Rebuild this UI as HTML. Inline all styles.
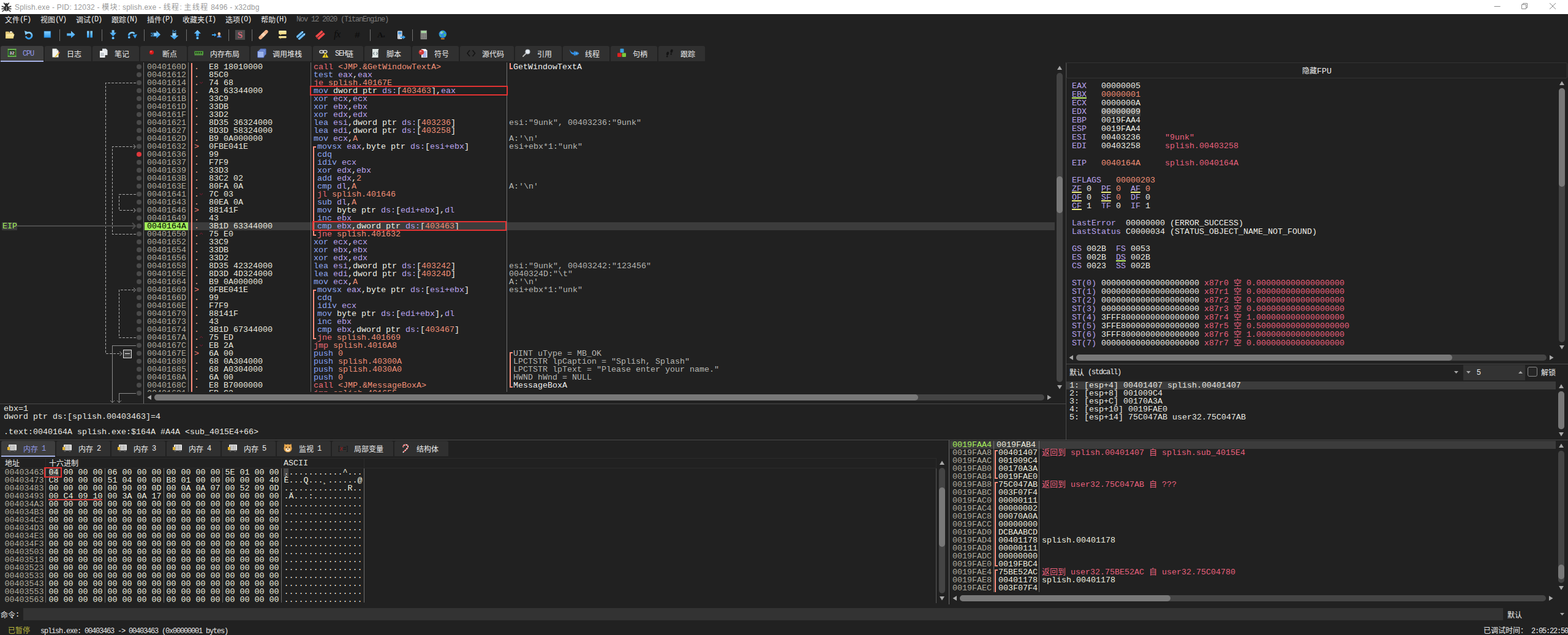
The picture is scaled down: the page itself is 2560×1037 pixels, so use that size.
<!DOCTYPE html>
<html lang="zh-CN"><head><meta charset="utf-8"><title>Splish.exe - x32dbg</title>
<style>
html,body{margin:0;padding:0;}
body{width:2560px;height:1037px;overflow:hidden;background:#212121;position:relative;font-family:"Liberation Mono","Noto Sans CJK SC",monospace;}
div,span,svg{box-sizing:border-box;}
.m{position:absolute;font-family:"Liberation Mono","Noto Sans CJK SC",monospace;font-size:13.333px;line-height:13px;height:13px;white-space:pre;letter-spacing:0;}
.cw13{font-size:13px;display:inline-block;width:13px;text-align:center;line-height:10px;font-family:"Noto Sans CJK SC",sans-serif;}
.r{position:absolute;font-family:"Liberation Mono","Noto Sans CJK SC",monospace;font-size:13.333px;line-height:14px;height:14px;white-space:pre;}
.u{position:absolute;font-family:"Liberation Mono","Noto Sans CJK SC",monospace;font-size:12px;line-height:14px;height:14px;white-space:pre;letter-spacing:-1.2px;}
.u .la{position:relative;top:-1.5px;}
.u .cj{letter-spacing:0;line-height:10px;font-family:"Noto Sans CJK SC","Liberation Sans",sans-serif;}
.t{position:absolute;font-family:"Liberation Sans","Noto Sans CJK SC",sans-serif;font-size:12px;line-height:16px;white-space:pre;}
.ab{position:absolute;}
.tc{letter-spacing:1.35px;}
/* token colours */
.mn{color:#8ea6f2;} .rg{color:#b9a3ee;} .pn{color:#ecece0;} .ms{color:#f0f0e6;}
.jm{color:#ec6a74;} .ad{color:#f08f76;} .vl{color:#f08f76;}
.ga{color:#b0ac9e;} .by{color:#e6e6dc;} .cm{color:#b6b6b2;} .cw{color:#f0f0f0;}
.rn{color:#b9a3ee;} .rv{color:#ecece4;} .rc{color:#f08f76;} .rs{color:#e8607c;}
.ul{border-bottom:1px solid #b8e04a;} .uy{border-bottom:1px solid #e8e060;}
</style></head><body>

<div style="position:absolute;left:0px;top:0px;width:2560px;height:23px;background:#ffffff;"></div>
<svg class="ab" style="left:2px;top:3px" width="17" height="17" viewBox="0 0 17 17">
<g fill="none" stroke="#2a2a2a" stroke-width="1.5" stroke-linecap="round">
<path d="M5 9 L1.2 7.2 M5 11.2 L1 11.5 M5.5 13 L2 15.5 M12 9 L15.8 7.2 M12 11.2 L16 11.5 M11.5 13 L15 15.5 M6 4 L4.5 2 M11 4 L12.5 2"/></g>
<ellipse cx="8.5" cy="10.6" rx="3.9" ry="4.9" fill="#333333"/><ellipse cx="8.5" cy="4.6" rx="2.8" ry="2.4" fill="#333333"/><rect x="8" y="8" width="1" height="7" fill="#a8a8a8"/></svg>
<div class="t" style="left:24px;top:4px;color:#9a9a9a;letter-spacing:0.21px;">Splish.exe - PID: 12032 - <span class="tc">模块</span>: splish.exe - <span class="tc">线程</span>: <span class="tc">主线程</span> 8496 - x32dbg</div>
<svg class="ab" style="left:2420px;top:0" width="140" height="23" viewBox="0 0 140 23">
<g fill="none" stroke="#8a8a8a" stroke-width="1">
<path d="M19.5 10.5 H29.5"/>
<path d="M64.5 7.5 H71.5 V14.5 H64.5 Z M66.5 7.5 V5.5 H73.5 V12.5 H71.5"/>
<path d="M110 5 L120 15 M120 5 L110 15"/></g></svg>
<div class="u" style="left:8px;top:26.5px;color:#ececec;"><span class="cj">文件</span><span class="la">(F)</span></div>
<div class="u" style="left:66px;top:26.5px;color:#ececec;"><span class="cj">视图</span><span class="la">(V)</span></div>
<div class="u" style="left:124px;top:26.5px;color:#ececec;"><span class="cj">调试</span><span class="la">(D)</span></div>
<div class="u" style="left:182px;top:26.5px;color:#ececec;"><span class="cj">跟踪</span><span class="la">(N)</span></div>
<div class="u" style="left:240px;top:26.5px;color:#ececec;"><span class="cj">插件</span><span class="la">(P)</span></div>
<div class="u" style="left:298px;top:26.5px;color:#ececec;"><span class="cj">收藏夹</span><span class="la">(I)</span></div>
<div class="u" style="left:368px;top:26.5px;color:#ececec;"><span class="cj">选项</span><span class="la">(O)</span></div>
<div class="u" style="left:426px;top:26.5px;color:#ececec;"><span class="cj">帮助</span><span class="la">(H)</span></div>
<div class="u" style="left:484px;top:26.5px;color:#7d7d7d;"><span class="la">Nov 12 2020 (TitanEngine)</span></div>
<svg class="ab" width="0" height="0" style="left:0;top:0"><defs><linearGradient id="bg" x1="0" y1="0" x2="0" y2="1"><stop offset="0" stop-color="#8ad0fc"/><stop offset="1" stop-color="#2a98ee"/></linearGradient><linearGradient id="yg" x1="0" y1="0" x2="0" y2="1"><stop offset="0" stop-color="#fbeeb0"/><stop offset="1" stop-color="#ecd27a"/></linearGradient></defs></svg>
<svg class="ab" style="left:8px;top:49px" width="16" height="16" viewBox="0 0 16 16"><path d="M1 3.6 Q1 2.6 2 2.6 H6.2 L7.6 4.2 H13 Q14 4.2 14 5.2 V13.6 H1 Z" fill="#e2c878"/><path d="M8 2.2 H11.8 V4.6 H8 Z" fill="#f6efd6"/><path d="M1 13.8 L3 6.8 H15.6 L13.6 13.8 Z" fill="url(#yg)"/></svg>
<svg class="ab" style="left:39px;top:49px" width="16" height="16" viewBox="0 0 16 16"><path d="M4.6 5.4 A5 5 0 1 1 3.2 10.4" fill="none" stroke="url(#bg)" stroke-width="2.8"/><path d="M1 1.2 L7.6 3.4 L2.6 8.4 Z" fill="#86ccfa"/></svg>
<svg class="ab" style="left:70px;top:49px" width="16" height="16" viewBox="0 0 16 16"><rect x="2" y="2" width="10.8" height="10.2" fill="url(#bg)"/><rect x="2" y="2" width="10.8" height="10.2" fill="none" stroke="#1f7fd0" stroke-width=".6"/></svg>
<svg class="ab" style="left:108px;top:49px" width="16" height="16" viewBox="0 0 16 16"><path d="M1.2 5.6 H8 V1.6 L14.6 7.4 L8 13.2 V9.4 H1.2 Z" fill="url(#bg)"/></svg>
<svg class="ab" style="left:139px;top:49px" width="16" height="16" viewBox="0 0 16 16"><rect x="3" y="1.6" width="3.6" height="10.8" fill="url(#bg)"/><rect x="8.4" y="1.6" width="3.6" height="10.8" fill="url(#bg)"/></svg>
<svg class="ab" style="left:177px;top:49px" width="16" height="16" viewBox="0 0 16 16"><path d="M5.6 0.2 H9.6 V4.6 H13 L7.6 10.4 L2.2 4.6 H5.6 Z" fill="url(#bg)"/><circle cx="7.6" cy="13.2" r="2.1" fill="#3aa2f0"/><circle cx="7.6" cy="13.2" r=".9" fill="#d8f0ff"/></svg>
<svg class="ab" style="left:208px;top:49px" width="16" height="16" viewBox="0 0 16 16"><path d="M2.2 9.4 A5.4 5.4 0 0 1 11.6 6" fill="none" stroke="url(#bg)" stroke-width="2.8"/><path d="M8.6 8 L16 7 L12.6 13.8 Z" fill="#3aa2f0"/><circle cx="2.8" cy="12" r="2" fill="#3aa2f0"/><circle cx="2.8" cy="12" r=".8" fill="#d8f0ff"/></svg>
<svg class="ab" style="left:246px;top:49px" width="16" height="16" viewBox="0 0 16 16"><path d="M5 4.4 H9.4 V1 L16 7.4 L9.4 13.8 V10.4 H5 Z" fill="url(#bg)"/><path d="M0.4 4.6h1.8v1.8h-1.8z M2.6 6.6h1.8v1.8h-1.8z M0.4 8.6h1.8v1.8h-1.8z M3 4.4h1.6v1.6h-1.6z M3 9h1.6v1.6h-1.6z" fill="#3aa2f0"/><path d="M6 6h1.2v1.2h-1.2z M8 6h1.2v1.2h-1.2z M6 8h1.2v1.2h-1.2z M8 8h1.2v1.2h-1.2z" fill="#e4f4ff"/></svg>
<svg class="ab" style="left:277px;top:49px" width="16" height="16" viewBox="0 0 16 16"><path d="M4.4 5 H10.6 V9 H14.4 L7.6 15.4 L0.8 9 H4.4 Z" fill="url(#bg)"/><path d="M4.6 -0.2h1.8v1.8h-1.8z M6.8 1.8h1.8v1.8h-1.8z M4.6 2.6h1.6v1.6h-1.6z M9 0.6h1.6v1.6h-1.6z M9 3.2h1.4v1.4h-1.4z" fill="#3aa2f0"/><path d="M5.6 6h1.2v1.2h-1.2z M7.6 6h1.2v1.2h-1.2z M5.6 8h1.2v1.2h-1.2z M7.6 8h1.2v1.2h-1.2z" fill="#e4f4ff"/></svg>
<svg class="ab" style="left:315px;top:49px" width="16" height="16" viewBox="0 0 16 16"><path d="M7.4 0 L13 5.8 H9.6 V10.2 H5.2 V5.8 H1.8 Z" fill="url(#bg)"/><circle cx="7.4" cy="13.2" r="2.1" fill="#3aa2f0"/><circle cx="7.4" cy="13.2" r=".9" fill="#d8f0ff"/></svg>
<svg class="ab" style="left:346px;top:49px" width="16" height="16" viewBox="0 0 16 16"><path d="M0 7 H4 V5 L7.4 8 L4 11 V9 H0 Z" fill="#3aa2f0"/><ellipse cx="11.8" cy="6.2" rx="2.2" ry="2.6" fill="#f4c096"/><path d="M9.6 5 Q11.8 2.6 14 5 Q13 3.4 11.8 3.6 Q10.6 3.4 9.6 5 Z" fill="#5a3a22"/><path d="M8 12.2 Q8.2 8.8 11.8 8.8 Q15.4 8.8 15.6 12.2 Z" fill="#3c7cd0"/><path d="M10.8 8.9 L11.8 11.6 L12.8 8.9 Z" fill="#f4f4f4"/></svg>
<div style="position:absolute;left:384px;top:49px;width:16px;height:16px;background:#4b4b4b;"></div>
<div class="ab" style="left:384px;top:49px;width:16px;height:16px;text-align:center;font:bold 15px/16px 'Liberation Serif',serif;color:#d2687a;">S</div>
<svg class="ab" style="left:422px;top:49px" width="16" height="16" viewBox="0 0 16 16"><g transform="rotate(-45 8 7.6)"><rect x="-1.6" y="4.8" width="19.2" height="5.6" rx="2.8" fill="#f0b288"/><rect x="5.2" y="4.8" width="5.6" height="5.6" fill="#f8d4b4"/></g></svg>
<svg class="ab" style="left:453px;top:49px" width="16" height="16" viewBox="0 0 16 16"><rect x="2" y="1" width="12.6" height="6" rx="1.2" fill="url(#yg)"/><path d="M4.4 7 V8.8 L6.6 7 Z" fill="#ecd27a"/><rect x="2" y="10" width="12.6" height="3.2" rx="1" fill="url(#yg)"/><path d="M4.4 13.2 V14.8 L6.4 13.2 Z" fill="#ecd27a"/></svg>
<svg class="ab" style="left:484px;top:49px" width="16" height="16" viewBox="0 0 16 16"><g transform="rotate(-42 8 8)"><path d="M-0.4 4 H12.4 L14.6 5.8 L12.4 7.6 H-0.4 Z" fill="#3a9ee8"/><path d="M-0.4 8.6 H12.4 L14.6 10.4 L12.4 12.2 H-0.4 Z" fill="#3a9ee8"/><path d="M0 5.2h11 M0 6.4h11 M0 9.8h11 M0 11h11" stroke="#d4ecfc" stroke-width=".6"/><circle cx="12.4" cy="5.8" r=".9" fill="#fff"/><circle cx="12.4" cy="10.4" r=".9" fill="#fff"/></g></svg>
<svg class="ab" style="left:515px;top:49px" width="16" height="16" viewBox="0 0 16 16"><g transform="rotate(-42 8 8)"><path d="M-0.4 4 H14.6 V7.6 H-0.4 L1.4 5.8 Z" fill="#f24848"/><path d="M-0.4 8.6 H14.6 V12.2 H-0.4 L1.4 10.4 Z" fill="#f24848"/></g></svg>
<div class="ab" style="left:545px;top:46px;width:18px;height:20px;font:italic 17px/20px 'Liberation Serif',serif;color:#0c0c0c;letter-spacing:-1px;">fx</div>
<div class="ab" style="left:579px;top:48px;width:16px;height:18px;font:italic 15px/18px 'Liberation Sans',sans-serif;color:#0c0c0c;">#</div>
<div class="ab" style="left:616px;top:48px;width:18px;height:18px;font:bold 13px/18px 'Liberation Serif',serif;color:#0c0c0c;">A<span style="font-size:7px">z</span></div>
<svg class="ab" style="left:646px;top:49px" width="16" height="16" viewBox="0 0 16 16"><rect x="3" y="1.4" width="7.6" height="13.4" rx="1" fill="#e4e8ee"/><rect x="4" y="2.8" width="5.6" height="4.6" fill="#4a9ae0"/><path d="M4.2 8.6h1.4v1.2h-1.4z M6.2 8.6h1.4v1.2h-1.4z M8.2 8.6h1.4v1.2h-1.4z M4.2 10.6h1.4v1.2h-1.4z M4.2 12.6h1.4v1.2h-1.4z" fill="#8a96a6"/><path d="M7.4 10.6 H12 V8.6 L16 11.8 L12 15 V13 H7.4 Z" fill="#3a9ee8"/></svg>
<svg class="ab" style="left:684px;top:49px" width="16" height="16" viewBox="0 0 16 16"><rect x="2.6" y="0.6" width="10.4" height="14.6" fill="#8e8e8a"/><rect x="3.6" y="1.6" width="8.4" height="3" fill="#a6dca0"/><path d="M3.8 6h2v1.8h-2z M6.8 6h2v1.8h-2z M9.8 6h2v1.8h-2z M3.8 8.8h2v1.8h-2z M6.8 8.8h2v1.8h-2z M9.8 8.8h2v1.8h-2z M3.8 11.6h2v1.8h-2z M6.8 11.6h2v1.8h-2z M9.8 11.6h2v1.8h-2z" fill="#6a6a66"/></svg>
<svg class="ab" style="left:715px;top:49px" width="16" height="16" viewBox="0 0 16 16"><circle cx="7.8" cy="6.8" r="6.2" fill="#2a8ce0"/><path d="M5 2.4 Q8 1 10.4 3.2 Q9.4 5.6 6.6 5.2 Z M9.6 6.8 Q12.6 5.8 13.2 8.2 Q11.6 10.6 10 9.8 Z M2.8 7.6 Q4.8 7.6 5.4 10.2 Q4 11.2 2.6 9.2 Z" fill="#52c46c"/><circle cx="5.6" cy="4.4" r="2.2" fill="#c4e6ff" opacity=".55"/><rect x="4.8" y="13.6" width="6" height="1.6" rx=".6" fill="#e08a2a"/></svg>
<div style="position:absolute;left:97px;top:48px;width:1px;height:19px;background:#707070;"></div>
<div style="position:absolute;left:166px;top:48px;width:1px;height:19px;background:#707070;"></div>
<div style="position:absolute;left:235px;top:48px;width:1px;height:19px;background:#707070;"></div>
<div style="position:absolute;left:304px;top:48px;width:1px;height:19px;background:#707070;"></div>
<div style="position:absolute;left:373px;top:48px;width:1px;height:19px;background:#707070;"></div>
<div style="position:absolute;left:411px;top:48px;width:1px;height:19px;background:#707070;"></div>
<div style="position:absolute;left:604px;top:48px;width:1px;height:19px;background:#707070;"></div>
<div style="position:absolute;left:673px;top:48px;width:1px;height:19px;background:#707070;"></div>
<div style="position:absolute;left:1px;top:75px;width:70px;height:25px;background:#3e3e3e;border-radius:3px 3px 0 0;"></div>
<div style="position:absolute;left:1px;top:99px;width:70px;height:2px;background:#a6b2e6;"></div>
<svg class="ab" style="left:11px;top:79px" width="18" height="18" viewBox="0 0 18 18"><rect x="1.5" y="0.5" width="14" height="13.5" fill="#3e8a2e"/><path d="M2 1h1.2v1.2h-1.2z M4.4 1h1.2v1.2h-1.2z M6.8 1h1.2v1.2h-1.2z M9.2 1h1.2v1.2h-1.2z M11.6 1h1.2v1.2h-1.2z M14 1h1.2v1.2h-1.2z M2 12.3h1.2v1.2h-1.2z M4.4 12.3h1.2v1.2h-1.2z M6.8 12.3h1.2v1.2h-1.2z M9.2 12.3h1.2v1.2h-1.2z M11.6 12.3h1.2v1.2h-1.2z M14 12.3h1.2v1.2h-1.2z" fill="#b8f08a"/><rect x="3.5" y="3.2" width="10" height="8" fill="#222"/><text x="8.5" y="10" font-family="Liberation Sans,sans-serif" font-weight="bold" font-size="7.5" fill="#f0f0f0" text-anchor="middle">32</text></svg>
<div class="u" style="left:37px;top:82.5px;color:#8f97e6;"><span class="la">CPU</span></div>
<div style="position:absolute;left:73px;top:75px;width:76px;height:25px;background:#303030;border-radius:3px 3px 0 0;"></div>
<svg class="ab" style="left:83px;top:79px" width="18" height="18" viewBox="0 0 18 18"><path d="M2.5 0.5 H9 L12.5 4 V14.5 H2.5 Z" fill="#f2f4f2"/><path d="M9 0.5 V4 H12.5 Z" fill="#c8d0c8"/><path d="M6.5 13.5 L12.5 6.5 L14 8 L8 14.5 L6 15 Z" fill="#e8c84a"/><path d="M12.5 6.5 L13.6 5.3 L15 6.8 L14 8 Z" fill="#e04a4a"/></svg>
<div class="u" style="left:109px;top:82.5px;color:#ececec;"><span class="cj">日志</span></div>
<div style="position:absolute;left:151px;top:75px;width:76px;height:25px;background:#303030;border-radius:3px 3px 0 0;"></div>
<svg class="ab" style="left:161px;top:79px" width="18" height="18" viewBox="0 0 18 18"><path d="M6 0.5 H12 L14.5 3 V11 H6 Z" fill="#e4e8ec"/><path d="M2 4 H8 L10.5 6.5 V15 H2 Z" fill="#f4f6f8"/><path d="M3.3 8h5.5 M3.3 10h5.5 M3.3 12h5.5" stroke="#8a949e" stroke-width=".9"/></svg>
<div class="u" style="left:187px;top:82.5px;color:#ececec;"><span class="cj">笔记</span></div>
<div style="position:absolute;left:229px;top:75px;width:76px;height:25px;background:#303030;border-radius:3px 3px 0 0;"></div>
<svg class="ab" style="left:239px;top:79px" width="18" height="18" viewBox="0 0 18 18"><circle cx="8.5" cy="6.5" r="3.6" fill="#d81818"/><circle cx="7.5" cy="5.4" r="1.2" fill="#f88" opacity=".8"/></svg>
<div class="u" style="left:265px;top:82.5px;color:#ececec;"><span class="cj">断点</span></div>
<div style="position:absolute;left:307px;top:75px;width:100px;height:25px;background:#303030;border-radius:3px 3px 0 0;"></div>
<svg class="ab" style="left:317px;top:79px" width="18" height="18" viewBox="0 0 18 18"><rect x="0.5" y="4.5" width="14.5" height="5.5" fill="#4ea03a"/><path d="M2 6h2v2.4h-2z M5 6h2v2.4h-2z M8 6h2v2.4h-2z M11 6h2v2.4h-2z" fill="#24301e"/><path d="M1 10h1.2v1.6h-1.2z M3.4 10h1.2v1.6h-1.2z M5.8 10h1.2v1.6h-1.2z M8.2 10h1.2v1.6h-1.2z M10.6 10h1.2v1.6h-1.2z M13 10h1.2v1.6h-1.2z" fill="#7ed05c"/></svg>
<div class="u" style="left:343px;top:82.5px;color:#ececec;"><span class="cj">内存布局</span></div>
<div style="position:absolute;left:409px;top:75px;width:100px;height:25px;background:#303030;border-radius:3px 3px 0 0;"></div>
<svg class="ab" style="left:419px;top:79px" width="18" height="18" viewBox="0 0 18 18"><rect x="5.5" y="0.5" width="10" height="10" rx="1" fill="#5a78c8"/><rect x="3.5" y="2.5" width="10" height="10" rx="1" fill="#7a96dc"/><rect x="1.5" y="4.5" width="10.5" height="10.5" rx="1" fill="#9eb4ea" stroke="#4a64b8" stroke-width="1"/></svg>
<div class="u" style="left:445px;top:82.5px;color:#ececec;"><span class="cj">调用堆栈</span></div>
<div style="position:absolute;left:511px;top:75px;width:82px;height:25px;background:#303030;border-radius:3px 3px 0 0;"></div>
<svg class="ab" style="left:521px;top:79px" width="18" height="18" viewBox="0 0 18 18"><rect x="0.8" y="3.6" width="6.4" height="4" rx="2" fill="none" stroke="#d8d8d8" stroke-width="1.5"/><rect x="6.4" y="3.6" width="6.4" height="4" rx="2" fill="none" stroke="#d8d8d8" stroke-width="1.5"/><path d="M10.2 6.5 L15.2 15 H5.2 Z" fill="#f2d21e"/><rect x="9.7" y="9.4" width="1.2" height="3" fill="#222"/><rect x="9.7" y="13" width="1.2" height="1.1" fill="#222"/></svg>
<div class="u" style="left:547px;top:82.5px;color:#ececec;"><span class="la">SEH</span><span class="cj">链</span></div>
<div style="position:absolute;left:595px;top:75px;width:76px;height:25px;background:#303030;border-radius:3px 3px 0 0;"></div>
<svg class="ab" style="left:605px;top:79px" width="18" height="18" viewBox="0 0 18 18"><path d="M3 1 H13.5 Q12.5 2.5 12.5 4 V15 H2 Q3 13.5 3 12 Z" fill="#dfe8e6"/><path d="M6.2 6 L4.4 8.2 L6.2 10.4 M9.4 6 L11.2 8.2 L9.4 10.4" fill="none" stroke="#6a7a80" stroke-width="1.1"/></svg>
<div class="u" style="left:631px;top:82.5px;color:#ececec;"><span class="cj">脚本</span></div>
<div style="position:absolute;left:673px;top:75px;width:76px;height:25px;background:#303030;border-radius:3px 3px 0 0;"></div>
<svg class="ab" style="left:683px;top:79px" width="18" height="18" viewBox="0 0 18 18"><path d="M5 1 H12 L14.5 3.5 V15 H5 Z" fill="#f2f4f8"/><path d="M8 5.5h5 M8 7.5h5 M8 9.5h5 M7 11.5h6 M7 13.5h6" stroke="#3a5ad0" stroke-width=".8" shape-rendering="crispEdges"/><circle cx="5" cy="6.2" r="4.3" fill="#d23a3a"/><circle cx="3.8" cy="4.8" r="1.5" fill="#f2a0a0" opacity=".8"/></svg>
<div class="u" style="left:709px;top:82.5px;color:#ececec;"><span class="cj">符号</span></div>
<div style="position:absolute;left:751px;top:75px;width:88px;height:25px;background:#303030;border-radius:3px 3px 0 0;"></div>
<svg class="ab" style="left:761px;top:79px" width="18" height="18" viewBox="0 0 18 18"><path d="M6 3 L2 8 L6 13 M10.5 3 L14.5 8 L10.5 13" fill="none" stroke="#141414" stroke-width="1.6"/></svg>
<div class="u" style="left:787px;top:82.5px;color:#ececec;"><span class="cj">源代码</span></div>
<div style="position:absolute;left:841px;top:75px;width:76px;height:25px;background:#303030;border-radius:3px 3px 0 0;"></div>
<svg class="ab" style="left:851px;top:79px" width="18" height="18" viewBox="0 0 18 18"><circle cx="10.5" cy="5.5" r="4" fill="#c4ccd4"/><circle cx="10.5" cy="5.5" r="2.7" fill="#e8eef4"/><path d="M7.5 8.5 L3 13" stroke="#b8b8b8" stroke-width="2" stroke-linecap="round"/></svg>
<div class="u" style="left:877px;top:82.5px;color:#ececec;"><span class="cj">引用</span></div>
<div style="position:absolute;left:919px;top:75px;width:76px;height:25px;background:#303030;border-radius:3px 3px 0 0;"></div>
<svg class="ab" style="left:929px;top:79px" width="18" height="18" viewBox="0 0 18 18"><path d="M1 1.5 Q3 7 8 7 L8 4 L12.5 8.3 L8 12.6 L8 10 Q2 10 1 1.5 Z" fill="#2f8fe8"/><path d="M10 4 L14.6 8.3 L10 12.6 L11.6 8.3 Z" fill="#5ab0f4"/><path d="M12.5 4.5 L16.5 8.3 L12.5 12.1 L14 8.3 Z" fill="#2f8fe8"/></svg>
<div class="u" style="left:955px;top:82.5px;color:#ececec;"><span class="cj">线程</span></div>
<div style="position:absolute;left:997px;top:75px;width:76px;height:25px;background:#303030;border-radius:3px 3px 0 0;"></div>
<svg class="ab" style="left:1007px;top:79px" width="18" height="18" viewBox="0 0 18 18"><rect x="5.5" y="0.5" width="6" height="6.5" rx="1" fill="#3aa0e0"/><rect x="1" y="7.5" width="6.5" height="6.5" rx="1" fill="#dc2020"/><rect x="8.5" y="7.5" width="6.5" height="6.5" rx="1" fill="#7cc83c"/></svg>
<div class="u" style="left:1033px;top:82.5px;color:#ececec;"><span class="cj">句柄</span></div>
<div style="position:absolute;left:1075px;top:75px;width:76px;height:25px;background:#303030;border-radius:3px 3px 0 0;"></div>
<svg class="ab" style="left:1085px;top:79px" width="18" height="18" viewBox="0 0 18 18"><ellipse cx="5" cy="8.5" rx="2" ry="3" fill="#141414" transform="rotate(15 5 8.5)"/><ellipse cx="4.2" cy="13.2" rx="1.3" ry="1.4" fill="#141414"/><ellipse cx="11.5" cy="4.5" rx="2" ry="3" fill="#141414" transform="rotate(15 11.5 4.5)"/><ellipse cx="10.7" cy="9.3" rx="1.3" ry="1.4" fill="#141414"/></svg>
<div class="u" style="left:1111px;top:82.5px;color:#ececec;"><span class="cj">跟踪</span></div>
<style>.ph{color:#86a0f4;} .dt{color:#f3b3a4;} .jk{color:#c8283c;}</style>
<div class="ab" style="left:0;top:0;width:1722px;height:640px;overflow:hidden;">
<div style="position:absolute;left:308px;top:363px;width:1414px;height:13px;background:#3c3c3c;"></div>
<div style="position:absolute;left:236px;top:363px;width:71px;height:13px;background:#a0ec5a;"></div>
<div style="position:absolute;left:307px;top:102px;width:1px;height:560px;background:#6e6e6e;"></div>
<div style="position:absolute;left:507px;top:102px;width:1px;height:560px;background:#6e6e6e;"></div>
<div style="position:absolute;left:827px;top:102px;width:1px;height:560px;background:#6e6e6e;"></div>
<div style="position:absolute;left:312px;top:103px;width:2px;height:560px;background:#ff8f7d;"></div>
<div class="m" style="left:240px;top:103px;color:#b0ac9e;">0040160D</div>
<div class="m" style="left:317px;top:103px;color:#f4a898;">.</div>
<div class="m" style="left:341px;top:103px;color:#e8e8de;">E8 18010000</div>
<div class="m" style="left:512px;top:103px;color:#e0e0e0;"><span class="jm">call</span> <span class="ad">&lt;JMP.&amp;GetWindowTextA&gt;</span></div>
<div class="m" style="left:838px;top:103px;color:#e0e0e0;"><span class="cw">GetWindowTextA</span></div>
<div class="m" style="left:240px;top:116px;color:#b0ac9e;">00401612</div>
<div class="m" style="left:317px;top:116px;color:#f4a898;">.</div>
<div class="m" style="left:341px;top:116px;color:#e8e8de;">85C0</div>
<div class="m" style="left:512px;top:116px;color:#e0e0e0;"><span class="mn">test</span> <span class="rg">eax</span><span class="pn">,</span><span class="rg">eax</span></div>
<div class="m" style="left:240px;top:129px;color:#b0ac9e;">00401614</div>
<div class="m" style="left:317px;top:129px;color:#f4a898;">.</div>
<svg class="ab" style="left:325px;top:133px" width="7" height="5" viewBox="0 0 7 5"><path d="M1 0.8 L3.5 3.2 L6 0.8" fill="none" stroke="#8a1c34" stroke-width="1"/></svg>
<div class="m" style="left:341px;top:129px;color:#e8e8de;">74 68</div>
<div class="m" style="left:512px;top:129px;color:#e0e0e0;"><span class="jm">je</span> <span class="ad">splish.40167E</span></div>
<div class="m" style="left:240px;top:142px;color:#b0ac9e;">00401616</div>
<div class="m" style="left:317px;top:142px;color:#f4a898;">.</div>
<div class="m" style="left:341px;top:142px;color:#e8e8de;">A3 63344000</div>
<div class="m" style="left:512px;top:142px;color:#e0e0e0;"><span class="mn">mov</span> <span class="ms">dword ptr</span><span class="pn"> </span><span class="rg">ds</span><span class="rg">:</span><span class="ms">[</span><span class="vl">403463</span><span class="ms">]</span><span class="pn">,</span><span class="rg">eax</span></div>
<div class="m" style="left:240px;top:155px;color:#b0ac9e;">0040161B</div>
<div class="m" style="left:317px;top:155px;color:#f4a898;">.</div>
<div class="m" style="left:341px;top:155px;color:#e8e8de;">33C9</div>
<div class="m" style="left:512px;top:155px;color:#e0e0e0;"><span class="mn">xor</span> <span class="rg">ecx</span><span class="pn">,</span><span class="rg">ecx</span></div>
<div class="m" style="left:240px;top:168px;color:#b0ac9e;">0040161D</div>
<div class="m" style="left:317px;top:168px;color:#f4a898;">.</div>
<div class="m" style="left:341px;top:168px;color:#e8e8de;">33DB</div>
<div class="m" style="left:512px;top:168px;color:#e0e0e0;"><span class="mn">xor</span> <span class="rg">ebx</span><span class="pn">,</span><span class="rg">ebx</span></div>
<div class="m" style="left:240px;top:181px;color:#b0ac9e;">0040161F</div>
<div class="m" style="left:317px;top:181px;color:#f4a898;">.</div>
<div class="m" style="left:341px;top:181px;color:#e8e8de;">33D2</div>
<div class="m" style="left:512px;top:181px;color:#e0e0e0;"><span class="mn">xor</span> <span class="rg">edx</span><span class="pn">,</span><span class="rg">edx</span></div>
<div class="m" style="left:240px;top:194px;color:#b0ac9e;">00401621</div>
<div class="m" style="left:317px;top:194px;color:#f4a898;">.</div>
<div class="m" style="left:341px;top:194px;color:#e8e8de;">8D35 36324000</div>
<div class="m" style="left:512px;top:194px;color:#e0e0e0;"><span class="mn">lea</span> <span class="rg">esi</span><span class="pn">,</span><span class="ms">dword ptr</span><span class="pn"> </span><span class="rg">ds</span><span class="rg">:</span><span class="ms">[</span><span class="vl">403236</span><span class="ms">]</span></div>
<div class="m" style="left:831px;top:194px;color:#e0e0e0;"><span class="cm">esi:"9unk", 00403236:"9unk"</span></div>
<div class="m" style="left:240px;top:207px;color:#b0ac9e;">00401627</div>
<div class="m" style="left:317px;top:207px;color:#f4a898;">.</div>
<div class="m" style="left:341px;top:207px;color:#e8e8de;">8D3D 58324000</div>
<div class="m" style="left:512px;top:207px;color:#e0e0e0;"><span class="mn">lea</span> <span class="rg">edi</span><span class="pn">,</span><span class="ms">dword ptr</span><span class="pn"> </span><span class="rg">ds</span><span class="rg">:</span><span class="ms">[</span><span class="vl">403258</span><span class="ms">]</span></div>
<div class="m" style="left:240px;top:220px;color:#b0ac9e;">0040162D</div>
<div class="m" style="left:317px;top:220px;color:#f4a898;">.</div>
<div class="m" style="left:341px;top:220px;color:#e8e8de;">B9 0A000000</div>
<div class="m" style="left:512px;top:220px;color:#e0e0e0;"><span class="mn">mov</span> <span class="rg">ecx</span><span class="pn">,</span><span class="vl">A</span></div>
<div class="m" style="left:831px;top:220px;color:#e0e0e0;"><span class="cm">A:'\n'</span></div>
<div class="m" style="left:240px;top:233px;color:#b0ac9e;">00401632</div>
<div class="m" style="left:317px;top:233px;color:#f07a6c;">&gt;</div>
<div class="m" style="left:341px;top:233px;color:#e8e8de;">0FBE041E</div>
<div class="m" style="left:518px;top:233px;color:#e0e0e0;"><span class="mn">movsx</span> <span class="rg">eax</span><span class="pn">,</span><span class="ms">byte ptr</span><span class="pn"> </span><span class="rg">ds</span><span class="rg">:</span><span class="ms">[</span><span class="rg">esi</span><span class="rg">+</span><span class="rg">ebx</span><span class="ms">]</span></div>
<div class="m" style="left:831px;top:233px;color:#e0e0e0;"><span class="cm">esi+ebx*1:"unk"</span></div>
<div class="m" style="left:240px;top:246px;color:#b0ac9e;">00401636</div>
<div class="m" style="left:317px;top:246px;color:#f4a898;">.</div>
<div class="m" style="left:341px;top:246px;color:#e8e8de;">99</div>
<div class="m" style="left:518px;top:246px;color:#e0e0e0;"><span class="mn">cdq</span></div>
<div class="m" style="left:240px;top:259px;color:#b0ac9e;">00401637</div>
<div class="m" style="left:317px;top:259px;color:#f4a898;">.</div>
<div class="m" style="left:341px;top:259px;color:#e8e8de;">F7F9</div>
<div class="m" style="left:518px;top:259px;color:#e0e0e0;"><span class="mn">idiv</span> <span class="rg">ecx</span></div>
<div class="m" style="left:240px;top:272px;color:#b0ac9e;">00401639</div>
<div class="m" style="left:317px;top:272px;color:#f4a898;">.</div>
<div class="m" style="left:341px;top:272px;color:#e8e8de;">33D3</div>
<div class="m" style="left:518px;top:272px;color:#e0e0e0;"><span class="mn">xor</span> <span class="rg">edx</span><span class="pn">,</span><span class="rg">ebx</span></div>
<div class="m" style="left:240px;top:285px;color:#b0ac9e;">0040163B</div>
<div class="m" style="left:317px;top:285px;color:#f4a898;">.</div>
<div class="m" style="left:341px;top:285px;color:#e8e8de;">83C2 02</div>
<div class="m" style="left:518px;top:285px;color:#e0e0e0;"><span class="mn">add</span> <span class="rg">edx</span><span class="pn">,</span><span class="vl">2</span></div>
<div class="m" style="left:240px;top:298px;color:#b0ac9e;">0040163E</div>
<div class="m" style="left:317px;top:298px;color:#f4a898;">.</div>
<div class="m" style="left:341px;top:298px;color:#e8e8de;">80FA 0A</div>
<div class="m" style="left:518px;top:298px;color:#e0e0e0;"><span class="mn">cmp</span> <span class="rg">dl</span><span class="pn">,</span><span class="vl">A</span></div>
<div class="m" style="left:831px;top:298px;color:#e0e0e0;"><span class="cm">A:'\n'</span></div>
<div class="m" style="left:240px;top:311px;color:#b0ac9e;">00401641</div>
<div class="m" style="left:317px;top:311px;color:#f4a898;">.</div>
<svg class="ab" style="left:325px;top:315px" width="7" height="5" viewBox="0 0 7 5"><path d="M1 0.8 L3.5 3.2 L6 0.8" fill="none" stroke="#8a1c34" stroke-width="1"/></svg>
<div class="m" style="left:341px;top:311px;color:#e8e8de;">7C 03</div>
<div class="m" style="left:518px;top:311px;color:#e0e0e0;"><span class="jm">jl</span> <span class="ad">splish.401646</span></div>
<div class="m" style="left:240px;top:324px;color:#b0ac9e;">00401643</div>
<div class="m" style="left:317px;top:324px;color:#f4a898;">.</div>
<div class="m" style="left:341px;top:324px;color:#e8e8de;">80EA 0A</div>
<div class="m" style="left:518px;top:324px;color:#e0e0e0;"><span class="mn">sub</span> <span class="rg">dl</span><span class="pn">,</span><span class="vl">A</span></div>
<div class="m" style="left:240px;top:337px;color:#b0ac9e;">00401646</div>
<div class="m" style="left:317px;top:337px;color:#f07a6c;">&gt;</div>
<div class="m" style="left:341px;top:337px;color:#e8e8de;">88141F</div>
<div class="m" style="left:518px;top:337px;color:#e0e0e0;"><span class="mn">mov</span> <span class="ms">byte ptr</span><span class="pn"> </span><span class="rg">ds</span><span class="rg">:</span><span class="ms">[</span><span class="rg">edi</span><span class="rg">+</span><span class="rg">ebx</span><span class="ms">]</span><span class="pn">,</span><span class="rg">dl</span></div>
<div class="m" style="left:240px;top:350px;color:#b0ac9e;">00401649</div>
<div class="m" style="left:317px;top:350px;color:#f4a898;">.</div>
<div class="m" style="left:341px;top:350px;color:#e8e8de;">43</div>
<div class="m" style="left:518px;top:350px;color:#e0e0e0;"><span class="mn">inc</span> <span class="rg">ebx</span></div>
<div class="m" style="left:240px;top:363px;color:#000000;">0040164A</div>
<div class="m" style="left:317px;top:363px;color:#f4a898;">.</div>
<div class="m" style="left:341px;top:363px;color:#e8e8de;">3B1D 63344000</div>
<div class="m" style="left:518px;top:363px;color:#e0e0e0;"><span class="mn">cmp</span> <span class="rg">ebx</span><span class="pn">,</span><span class="ms">dword ptr</span><span class="pn"> </span><span class="rg">ds</span><span class="rg">:</span><span class="ms">[</span><span class="vl">403463</span><span class="ms">]</span></div>
<div class="m" style="left:240px;top:376px;color:#b0ac9e;">00401650</div>
<div class="m" style="left:317px;top:376px;color:#f4a898;">.</div>
<svg class="ab" style="left:325px;top:379px" width="7" height="5" viewBox="0 0 7 5"><path d="M1 3.8 L3.5 1.4 L6 3.8" fill="none" stroke="#8a1c34" stroke-width="1"/></svg>
<div class="m" style="left:341px;top:376px;color:#e8e8de;">75 E0</div>
<div class="m" style="left:518px;top:376px;color:#e0e0e0;"><span class="jm">jne</span> <span class="ad">splish.401632</span></div>
<div class="m" style="left:240px;top:389px;color:#b0ac9e;">00401652</div>
<div class="m" style="left:317px;top:389px;color:#f4a898;">.</div>
<div class="m" style="left:341px;top:389px;color:#e8e8de;">33C9</div>
<div class="m" style="left:512px;top:389px;color:#e0e0e0;"><span class="mn">xor</span> <span class="rg">ecx</span><span class="pn">,</span><span class="rg">ecx</span></div>
<div class="m" style="left:240px;top:402px;color:#b0ac9e;">00401654</div>
<div class="m" style="left:317px;top:402px;color:#f4a898;">.</div>
<div class="m" style="left:341px;top:402px;color:#e8e8de;">33DB</div>
<div class="m" style="left:512px;top:402px;color:#e0e0e0;"><span class="mn">xor</span> <span class="rg">ebx</span><span class="pn">,</span><span class="rg">ebx</span></div>
<div class="m" style="left:240px;top:415px;color:#b0ac9e;">00401656</div>
<div class="m" style="left:317px;top:415px;color:#f4a898;">.</div>
<div class="m" style="left:341px;top:415px;color:#e8e8de;">33D2</div>
<div class="m" style="left:512px;top:415px;color:#e0e0e0;"><span class="mn">xor</span> <span class="rg">edx</span><span class="pn">,</span><span class="rg">edx</span></div>
<div class="m" style="left:240px;top:428px;color:#b0ac9e;">00401658</div>
<div class="m" style="left:317px;top:428px;color:#f4a898;">.</div>
<div class="m" style="left:341px;top:428px;color:#e8e8de;">8D35 42324000</div>
<div class="m" style="left:512px;top:428px;color:#e0e0e0;"><span class="mn">lea</span> <span class="rg">esi</span><span class="pn">,</span><span class="ms">dword ptr</span><span class="pn"> </span><span class="rg">ds</span><span class="rg">:</span><span class="ms">[</span><span class="vl">403242</span><span class="ms">]</span></div>
<div class="m" style="left:831px;top:428px;color:#e0e0e0;"><span class="cm">esi:"9unk", 00403242:"123456"</span></div>
<div class="m" style="left:240px;top:441px;color:#b0ac9e;">0040165E</div>
<div class="m" style="left:317px;top:441px;color:#f4a898;">.</div>
<div class="m" style="left:341px;top:441px;color:#e8e8de;">8D3D 4D324000</div>
<div class="m" style="left:512px;top:441px;color:#e0e0e0;"><span class="mn">lea</span> <span class="rg">edi</span><span class="pn">,</span><span class="ms">dword ptr</span><span class="pn"> </span><span class="rg">ds</span><span class="rg">:</span><span class="ms">[</span><span class="vl">40324D</span><span class="ms">]</span></div>
<div class="m" style="left:831px;top:441px;color:#e0e0e0;"><span class="cm">0040324D:"\t"</span></div>
<div class="m" style="left:240px;top:454px;color:#b0ac9e;">00401664</div>
<div class="m" style="left:317px;top:454px;color:#f4a898;">.</div>
<div class="m" style="left:341px;top:454px;color:#e8e8de;">B9 0A000000</div>
<div class="m" style="left:512px;top:454px;color:#e0e0e0;"><span class="mn">mov</span> <span class="rg">ecx</span><span class="pn">,</span><span class="vl">A</span></div>
<div class="m" style="left:831px;top:454px;color:#e0e0e0;"><span class="cm">A:'\n'</span></div>
<div class="m" style="left:240px;top:467px;color:#b0ac9e;">00401669</div>
<div class="m" style="left:317px;top:467px;color:#f07a6c;">&gt;</div>
<div class="m" style="left:341px;top:467px;color:#e8e8de;">0FBE041E</div>
<div class="m" style="left:518px;top:467px;color:#e0e0e0;"><span class="mn">movsx</span> <span class="rg">eax</span><span class="pn">,</span><span class="ms">byte ptr</span><span class="pn"> </span><span class="rg">ds</span><span class="rg">:</span><span class="ms">[</span><span class="rg">esi</span><span class="rg">+</span><span class="rg">ebx</span><span class="ms">]</span></div>
<div class="m" style="left:831px;top:467px;color:#e0e0e0;"><span class="cm">esi+ebx*1:"unk"</span></div>
<div class="m" style="left:240px;top:480px;color:#b0ac9e;">0040166D</div>
<div class="m" style="left:317px;top:480px;color:#f4a898;">.</div>
<div class="m" style="left:341px;top:480px;color:#e8e8de;">99</div>
<div class="m" style="left:518px;top:480px;color:#e0e0e0;"><span class="mn">cdq</span></div>
<div class="m" style="left:240px;top:493px;color:#b0ac9e;">0040166E</div>
<div class="m" style="left:317px;top:493px;color:#f4a898;">.</div>
<div class="m" style="left:341px;top:493px;color:#e8e8de;">F7F9</div>
<div class="m" style="left:518px;top:493px;color:#e0e0e0;"><span class="mn">idiv</span> <span class="rg">ecx</span></div>
<div class="m" style="left:240px;top:506px;color:#b0ac9e;">00401670</div>
<div class="m" style="left:317px;top:506px;color:#f4a898;">.</div>
<div class="m" style="left:341px;top:506px;color:#e8e8de;">88141F</div>
<div class="m" style="left:518px;top:506px;color:#e0e0e0;"><span class="mn">mov</span> <span class="ms">byte ptr</span><span class="pn"> </span><span class="rg">ds</span><span class="rg">:</span><span class="ms">[</span><span class="rg">edi</span><span class="rg">+</span><span class="rg">ebx</span><span class="ms">]</span><span class="pn">,</span><span class="rg">dl</span></div>
<div class="m" style="left:240px;top:519px;color:#b0ac9e;">00401673</div>
<div class="m" style="left:317px;top:519px;color:#f4a898;">.</div>
<div class="m" style="left:341px;top:519px;color:#e8e8de;">43</div>
<div class="m" style="left:518px;top:519px;color:#e0e0e0;"><span class="mn">inc</span> <span class="rg">ebx</span></div>
<div class="m" style="left:240px;top:532px;color:#b0ac9e;">00401674</div>
<div class="m" style="left:317px;top:532px;color:#f4a898;">.</div>
<div class="m" style="left:341px;top:532px;color:#e8e8de;">3B1D 67344000</div>
<div class="m" style="left:518px;top:532px;color:#e0e0e0;"><span class="mn">cmp</span> <span class="rg">ebx</span><span class="pn">,</span><span class="ms">dword ptr</span><span class="pn"> </span><span class="rg">ds</span><span class="rg">:</span><span class="ms">[</span><span class="vl">403467</span><span class="ms">]</span></div>
<div class="m" style="left:240px;top:545px;color:#b0ac9e;">0040167A</div>
<div class="m" style="left:317px;top:545px;color:#f4a898;">.</div>
<svg class="ab" style="left:325px;top:548px" width="7" height="5" viewBox="0 0 7 5"><path d="M1 3.8 L3.5 1.4 L6 3.8" fill="none" stroke="#8a1c34" stroke-width="1"/></svg>
<div class="m" style="left:341px;top:545px;color:#e8e8de;">75 ED</div>
<div class="m" style="left:518px;top:545px;color:#e0e0e0;"><span class="jm">jne</span> <span class="ad">splish.401669</span></div>
<div class="m" style="left:240px;top:558px;color:#b0ac9e;">0040167C</div>
<div class="m" style="left:317px;top:558px;color:#f4a898;">.</div>
<svg class="ab" style="left:325px;top:562px" width="7" height="5" viewBox="0 0 7 5"><path d="M1 0.8 L3.5 3.2 L6 0.8" fill="none" stroke="#8a1c34" stroke-width="1"/></svg>
<div class="m" style="left:341px;top:558px;color:#e8e8de;">EB 2A</div>
<div class="m" style="left:512px;top:558px;color:#e0e0e0;"><span class="jm">jmp</span> <span class="ad">splish.4016A8</span></div>
<div class="m" style="left:240px;top:571px;color:#b0ac9e;">0040167E</div>
<div class="m" style="left:317px;top:571px;color:#f07a6c;">&gt;</div>
<div class="m" style="left:341px;top:571px;color:#e8e8de;">6A 00</div>
<div class="m" style="left:512px;top:571px;color:#e0e0e0;"><span class="ph">push</span> <span class="vl">0</span></div>
<div class="m" style="left:838px;top:571px;color:#e0e0e0;"><span class="cm">UINT uType = MB_OK</span></div>
<div class="m" style="left:240px;top:584px;color:#b0ac9e;">00401680</div>
<div class="m" style="left:317px;top:584px;color:#f4a898;">.</div>
<div class="m" style="left:341px;top:584px;color:#e8e8de;">68 0A304000</div>
<div class="m" style="left:512px;top:584px;color:#e0e0e0;"><span class="ph">push</span> <span class="ad">splish.40300A</span></div>
<div class="m" style="left:838px;top:584px;color:#e0e0e0;"><span class="cm">LPCTSTR lpCaption = "Splish, Splash"</span></div>
<div class="m" style="left:240px;top:597px;color:#b0ac9e;">00401685</div>
<div class="m" style="left:317px;top:597px;color:#f4a898;">.</div>
<div class="m" style="left:341px;top:597px;color:#e8e8de;">68 A0304000</div>
<div class="m" style="left:512px;top:597px;color:#e0e0e0;"><span class="ph">push</span> <span class="ad">splish.4030A0</span></div>
<div class="m" style="left:838px;top:597px;color:#e0e0e0;"><span class="cm">LPCTSTR lpText = "Please enter your name."</span></div>
<div class="m" style="left:240px;top:610px;color:#b0ac9e;">0040168A</div>
<div class="m" style="left:317px;top:610px;color:#f4a898;">.</div>
<div class="m" style="left:341px;top:610px;color:#e8e8de;">6A 00</div>
<div class="m" style="left:512px;top:610px;color:#e0e0e0;"><span class="ph">push</span> <span class="vl">0</span></div>
<div class="m" style="left:838px;top:610px;color:#e0e0e0;"><span class="cm">HWND hWnd = NULL</span></div>
<div class="m" style="left:240px;top:623px;color:#b0ac9e;">0040168C</div>
<div class="m" style="left:317px;top:623px;color:#f4a898;">.</div>
<div class="m" style="left:341px;top:623px;color:#e8e8de;">E8 B7000000</div>
<div class="m" style="left:512px;top:623px;color:#e0e0e0;"><span class="jm">call</span> <span class="ad">&lt;JMP.&amp;MessageBoxA&gt;</span></div>
<div class="m" style="left:838px;top:623px;color:#e0e0e0;"><span class="cw">MessageBoxA</span></div>
<div class="m" style="left:240px;top:636px;color:#b0ac9e;">00401691</div>
<div class="m" style="left:317px;top:636px;color:#f4a898;">.</div>
<svg class="ab" style="left:325px;top:640px" width="7" height="5" viewBox="0 0 7 5"><path d="M1 0.8 L3.5 3.2 L6 0.8" fill="none" stroke="#8a1c34" stroke-width="1"/></svg>
<div class="m" style="left:341px;top:636px;color:#e8e8de;">EB C2</div>
<div class="m" style="left:512px;top:636px;color:#e0e0e0;"><span class="jm">jmp</span> <span class="ad">splish.401655</span></div>
<div style="position:absolute;left:511px;top:239px;width:2px;height:146px;background:#ff8f7d;"></div>
<div style="position:absolute;left:511px;top:239px;width:5px;height:2px;background:#ff8f7d;"></div>
<div style="position:absolute;left:511px;top:383px;width:5px;height:2px;background:#ff8f7d;"></div>
<div style="position:absolute;left:511px;top:473px;width:2px;height:81px;background:#ff8f7d;"></div>
<div style="position:absolute;left:511px;top:473px;width:5px;height:2px;background:#ff8f7d;"></div>
<div style="position:absolute;left:511px;top:552px;width:5px;height:2px;background:#ff8f7d;"></div>
<div style="position:absolute;left:832px;top:103px;width:2px;height:10px;background:#ff8f7d;"></div>
<div style="position:absolute;left:832px;top:111px;width:5px;height:2px;background:#ff8f7d;"></div>
<div style="position:absolute;left:832px;top:574.5px;width:2px;height:58.5px;background:#ff8f7d;"></div>
<div style="position:absolute;left:832px;top:574.5px;width:5px;height:2px;background:#ff8f7d;"></div>
<div style="position:absolute;left:832px;top:631px;width:5px;height:2px;background:#ff8f7d;"></div>
<div class="ab" style="left:506px;top:139.5px;width:323px;height:16.5px;border:2px solid #e23232;"></div>
<div class="ab" style="left:510px;top:361px;width:317px;height:16px;border:2px solid #e23232;"></div>
</div>
<div style="position:absolute;left:234px;top:102px;width:1px;height:557px;background:#6e6e6e;"></div>
<div class="ab" style="left:223px;top:105px;width:8px;height:8px;border-radius:50%;background:#4a4a4a;"></div>
<div class="ab" style="left:223px;top:118px;width:8px;height:8px;border-radius:50%;background:#4a4a4a;"></div>
<div class="ab" style="left:223px;top:131px;width:8px;height:8px;border-radius:50%;background:#4a4a4a;"></div>
<div class="ab" style="left:223px;top:144px;width:8px;height:8px;border-radius:50%;background:#4a4a4a;"></div>
<div class="ab" style="left:223px;top:157px;width:8px;height:8px;border-radius:50%;background:#4a4a4a;"></div>
<div class="ab" style="left:223px;top:170px;width:8px;height:8px;border-radius:50%;background:#4a4a4a;"></div>
<div class="ab" style="left:223px;top:183px;width:8px;height:8px;border-radius:50%;background:#4a4a4a;"></div>
<div class="ab" style="left:223px;top:196px;width:8px;height:8px;border-radius:50%;background:#4a4a4a;"></div>
<div class="ab" style="left:223px;top:209px;width:8px;height:8px;border-radius:50%;background:#4a4a4a;"></div>
<div class="ab" style="left:223px;top:222px;width:8px;height:8px;border-radius:50%;background:#4a4a4a;"></div>
<div class="ab" style="left:223px;top:235px;width:8px;height:8px;border-radius:50%;background:#4a4a4a;"></div>
<div class="ab" style="left:223px;top:248px;width:8px;height:8px;border-radius:50%;background:#e0383c;"></div>
<div class="ab" style="left:223px;top:261px;width:8px;height:8px;border-radius:50%;background:#4a4a4a;"></div>
<div class="ab" style="left:223px;top:274px;width:8px;height:8px;border-radius:50%;background:#4a4a4a;"></div>
<div class="ab" style="left:223px;top:287px;width:8px;height:8px;border-radius:50%;background:#4a4a4a;"></div>
<div class="ab" style="left:223px;top:300px;width:8px;height:8px;border-radius:50%;background:#4a4a4a;"></div>
<div class="ab" style="left:223px;top:313px;width:8px;height:8px;border-radius:50%;background:#4a4a4a;"></div>
<div class="ab" style="left:223px;top:326px;width:8px;height:8px;border-radius:50%;background:#4a4a4a;"></div>
<div class="ab" style="left:223px;top:339px;width:8px;height:8px;border-radius:50%;background:#4a4a4a;"></div>
<div class="ab" style="left:223px;top:352px;width:8px;height:8px;border-radius:50%;background:#4a4a4a;"></div>
<div class="ab" style="left:223px;top:365px;width:8px;height:8px;border-radius:50%;background:#4a4a4a;"></div>
<div class="ab" style="left:223px;top:378px;width:8px;height:8px;border-radius:50%;background:#4a4a4a;"></div>
<div class="ab" style="left:223px;top:391px;width:8px;height:8px;border-radius:50%;background:#4a4a4a;"></div>
<div class="ab" style="left:223px;top:404px;width:8px;height:8px;border-radius:50%;background:#4a4a4a;"></div>
<div class="ab" style="left:223px;top:417px;width:8px;height:8px;border-radius:50%;background:#4a4a4a;"></div>
<div class="ab" style="left:223px;top:430px;width:8px;height:8px;border-radius:50%;background:#4a4a4a;"></div>
<div class="ab" style="left:223px;top:443px;width:8px;height:8px;border-radius:50%;background:#4a4a4a;"></div>
<div class="ab" style="left:223px;top:456px;width:8px;height:8px;border-radius:50%;background:#4a4a4a;"></div>
<div class="ab" style="left:223px;top:469px;width:8px;height:8px;border-radius:50%;background:#4a4a4a;"></div>
<div class="ab" style="left:223px;top:482px;width:8px;height:8px;border-radius:50%;background:#4a4a4a;"></div>
<div class="ab" style="left:223px;top:495px;width:8px;height:8px;border-radius:50%;background:#4a4a4a;"></div>
<div class="ab" style="left:223px;top:508px;width:8px;height:8px;border-radius:50%;background:#4a4a4a;"></div>
<div class="ab" style="left:223px;top:521px;width:8px;height:8px;border-radius:50%;background:#4a4a4a;"></div>
<div class="ab" style="left:223px;top:534px;width:8px;height:8px;border-radius:50%;background:#4a4a4a;"></div>
<div class="ab" style="left:223px;top:547px;width:8px;height:8px;border-radius:50%;background:#4a4a4a;"></div>
<div class="ab" style="left:223px;top:560px;width:8px;height:8px;border-radius:50%;background:#4a4a4a;"></div>
<div class="ab" style="left:223px;top:573px;width:8px;height:8px;border-radius:50%;background:#4a4a4a;"></div>
<div class="ab" style="left:223px;top:586px;width:8px;height:8px;border-radius:50%;background:#4a4a4a;"></div>
<div class="ab" style="left:223px;top:599px;width:8px;height:8px;border-radius:50%;background:#4a4a4a;"></div>
<div class="ab" style="left:223px;top:612px;width:8px;height:8px;border-radius:50%;background:#4a4a4a;"></div>
<div class="ab" style="left:223px;top:625px;width:8px;height:8px;border-radius:50%;background:#4a4a4a;"></div>
<div class="ab" style="left:223px;top:638px;width:8px;height:8px;border-radius:50%;background:#4a4a4a;"></div>
<svg class="ab" style="left:0;top:100px" width="236" height="560" viewBox="0 100 236 560" shape-rendering="crispEdges"><path d="M222 135.5 H172.5 V577.5 H198" fill="none" stroke="#a8a8a8" stroke-width="1" stroke-dasharray="4 2"/><path d="M195.5 574.0 L199 577.5 L195.5 581.0" fill="none" stroke="#a8a8a8" stroke-width="1" shape-rendering="auto"/><path d="M222 382.5 H183.5 V239.5 H220" fill="none" stroke="#a8a8a8" stroke-width="1" stroke-dasharray="4 2"/><path d="M218.0 236.0 L221.5 239.5 L218.0 243.0" fill="none" stroke="#a8a8a8" stroke-width="1" shape-rendering="auto"/><path d="M222 317.5 H194.5 V343.5 H220" fill="none" stroke="#a8a8a8" stroke-width="1" stroke-dasharray="4 2"/><path d="M218.0 340.0 L221.5 343.5 L218.0 347.0" fill="none" stroke="#a8a8a8" stroke-width="1" shape-rendering="auto"/><path d="M222 551.5 H194.5 V473.5 H220" fill="none" stroke="#a8a8a8" stroke-width="1" stroke-dasharray="4 2"/><path d="M218.0 470.0 L221.5 473.5 L218.0 477.0" fill="none" stroke="#a8a8a8" stroke-width="1" shape-rendering="auto"/><path d="M222 564.5 H183.5 V657" fill="none" stroke="#8c8c8c" stroke-width="1"/><path d="M180.0 654.0 L183.5 657.5 L187.0 654.0" fill="none" stroke="#8c8c8c" stroke-width="1" shape-rendering="auto"/><path d="M222 642.5 H194.5 V657" fill="none" stroke="#8c8c8c" stroke-width="1"/><path d="M191.0 654.0 L194.5 657.5 L198.0 654.0" fill="none" stroke="#8c8c8c" stroke-width="1" shape-rendering="auto"/><path d="M28 369 H220" fill="none" stroke="#4c4c4c" stroke-width="2"/><path d="M216 364 L221 369 L216 374" fill="none" stroke="#4c4c4c" stroke-width="2" shape-rendering="auto"/></svg>
<div style="position:absolute;left:3px;top:363px;width:25px;height:13px;background:#3c3c3c;"></div>
<div class="m" style="left:4px;top:363px;color:#a0ec5a;">EIP</div>
<div class="ab" style="left:201px;top:571px;width:14px;height:14px;border:1px solid #e6e6e6;background:#424242;"></div>
<div style="position:absolute;left:204px;top:577px;width:8px;height:1px;background:#f0f0f0;"></div>
<svg class="ab" style="left:1726px;top:107px" width="8" height="8" viewBox="0 0 8 8"><path d="M0 7 L4 0.5 L8 7 Z" fill="#a8a8a8"/></svg>
<div style="position:absolute;left:1725px;top:119px;width:10px;height:505px;background:#444444;border-radius:5px;"></div>
<div style="position:absolute;left:1725px;top:288px;width:10px;height:60px;background:#787878;border-radius:5px;"></div>
<svg class="ab" style="left:1726px;top:628px" width="8" height="8" viewBox="0 0 8 8"><path d="M0 1 L4 7.5 L8 1 Z" fill="#a8a8a8"/></svg>
<svg class="ab" style="left:240px;top:645px" width="8" height="8" viewBox="0 0 8 8"><path d="M7 0 L0.5 4 L7 8 Z" fill="#a8a8a8"/></svg>
<div style="position:absolute;left:252px;top:644px;width:1453px;height:10px;background:#444444;border-radius:5px;"></div>
<div style="position:absolute;left:252px;top:644px;width:1247px;height:10px;background:#787878;border-radius:5px;"></div>
<svg class="ab" style="left:1709px;top:645px" width="8" height="8" viewBox="0 0 8 8"><path d="M1 0 L7.5 4 L1 8 Z" fill="#a8a8a8"/></svg>
<div style="position:absolute;left:0px;top:659px;width:1740px;height:1px;background:#4a4a4a;"></div>
<div style="position:absolute;left:0px;top:718px;width:2560px;height:1px;background:#4a4a4a;"></div>
<div style="position:absolute;left:1740px;top:102px;width:1px;height:617px;background:#4a4a4a;"></div>
<div class="m" style="left:6px;top:661px;color:#e8e8e0;">ebx=1</div>
<div class="m" style="left:6px;top:674px;color:#e8e8e0;">dword ptr ds:[splish.00403463]=4</div>
<div class="m" style="left:6px;top:699px;color:#e8e8e0;">.text:0040164A splish.exe:$164A #A4A &lt;sub_4015E4+66&gt;</div>
<div class="ab" style="left:1741px;top:102px;width:818px;height:26px;border:1px solid #343434;border-radius:2px;"></div>
<div class="u" style="left:2126px;top:110px;color:#ececec;"><span class="cj">隐藏</span><span style="font-size:13.333px;letter-spacing:0;">FPU</span></div>
<div class="r" style="left:1750px;top:134px;"><span class="rn">EAX</span>   <span class="rv">00000005</span></div>
<div style="position:absolute;left:1750px;top:159px;width:24px;height:2px;background:#bff06a;"></div>
<div class="r" style="left:1750px;top:148px;"><span class="rn">EBX</span>   <span class="rc">00000001</span></div>
<div class="r" style="left:1750px;top:162px;"><span class="rn">ECX</span>   <span class="rv">0000000A</span></div>
<div style="position:absolute;left:1798px;top:176px;width:64px;height:14px;background:#3c3c3c;"></div>
<div class="r" style="left:1750px;top:176px;"><span class="rn">EDX</span>   <span class="rv">00000009</span></div>
<div class="r" style="left:1750px;top:190px;"><span class="rn">EBP</span>   <span class="rv">0019FAA4</span></div>
<div class="r" style="left:1750px;top:204px;"><span class="rn">ESP</span>   <span class="rv">0019FAA4</span></div>
<div class="r" style="left:1750px;top:218px;"><span class="rn">ESI</span>   <span class="rv">00403236</span>     <span class="rs">"9unk"</span></div>
<div class="r" style="left:1750px;top:232px;"><span class="rn">EDI</span>   <span class="rv">00403258</span>     <span class="rs">splish.00403258</span></div>
<div class="r" style="left:1750px;top:260px;"><span class="rn">EIP</span>   <span class="rc">0040164A</span>     <span class="rs">splish.0040164A</span></div>
<div class="r" style="left:1750px;top:288px;"><span class="rn">EFLAGS</span>   <span class="rc">00000203</span></div>
<div style="position:absolute;left:1750px;top:313px;width:16px;height:2px;background:#f0f082;"></div>
<div style="position:absolute;left:1798px;top:313px;width:16px;height:2px;background:#f0f082;"></div>
<div style="position:absolute;left:1846px;top:313px;width:16px;height:2px;background:#f0f082;"></div>
<div class="r" style="left:1750px;top:302px;"><span class="rn">ZF</span> <span class="rv">0</span>  <span class="rn">PF</span> <span class="rc">0</span>  <span class="rn">AF</span> <span class="rc">0</span></div>
<div style="position:absolute;left:1750px;top:327px;width:16px;height:2px;background:#f0f082;"></div>
<div style="position:absolute;left:1798px;top:327px;width:16px;height:2px;background:#f0f082;"></div>
<div class="r" style="left:1750px;top:316px;"><span class="rn">OF</span> <span class="rv">0</span>  <span class="rn">SF</span> <span class="rc">0</span>  <span class="rn">DF</span> <span class="rv">0</span></div>
<div style="position:absolute;left:1750px;top:341px;width:16px;height:2px;background:#f0f082;"></div>
<div class="r" style="left:1750px;top:330px;"><span class="rn">CF</span> <span class="rv">1</span>  <span class="rn">TF</span> <span class="rv">0</span>  <span class="rn">IF</span> <span class="rv">1</span></div>
<div class="r" style="left:1750px;top:358px;"><span class="rn">LastError</span>  <span class="rv">00000000 (ERROR_SUCCESS)</span></div>
<div class="r" style="left:1750px;top:372px;"><span class="rn">LastStatus</span> <span class="rv">C0000034 (STATUS_OBJECT_NAME_NOT_FOUND)</span></div>
<div class="r" style="left:1750px;top:400px;"><span class="rn">GS</span> <span class="rv">002B</span>  <span class="rn">FS</span> <span class="rv">0053</span></div>
<div style="position:absolute;left:1822px;top:425px;width:16px;height:2px;background:#bff06a;"></div>
<div class="r" style="left:1750px;top:414px;"><span class="rn">ES</span> <span class="rv">002B</span>  <span class="rn">DS</span> <span class="rv">002B</span></div>
<div class="r" style="left:1750px;top:428px;"><span class="rn">CS</span> <span class="rv">0023</span>  <span class="rn">SS</span> <span class="rv">002B</span></div>
<div class="r" style="left:1750px;top:456px;"><span class="rn">ST(0)</span> <span class="rv">00000000000000000000</span> <span class="rs">x87r0 </span><span class="rs cw13">空</span><span class="rs"> 0.000000000000000000</span></div>
<div class="r" style="left:1750px;top:470px;"><span class="rn">ST(1)</span> <span class="rv">00000000000000000000</span> <span class="rs">x87r1 </span><span class="rs cw13">空</span><span class="rs"> 0.000000000000000000</span></div>
<div class="r" style="left:1750px;top:484px;"><span class="rn">ST(2)</span> <span class="rv">00000000000000000000</span> <span class="rs">x87r2 </span><span class="rs cw13">空</span><span class="rs"> 0.000000000000000000</span></div>
<div class="r" style="left:1750px;top:498px;"><span class="rn">ST(3)</span> <span class="rv">00000000000000000000</span> <span class="rs">x87r3 </span><span class="rs cw13">空</span><span class="rs"> 0.000000000000000000</span></div>
<div class="r" style="left:1750px;top:512px;"><span class="rn">ST(4)</span> <span class="rv">3FFF8000000000000000</span> <span class="rs">x87r4 </span><span class="rs cw13">空</span><span class="rs"> 1.000000000000000000</span></div>
<div class="r" style="left:1750px;top:526px;"><span class="rn">ST(5)</span> <span class="rv">3FFE8000000000000000</span> <span class="rs">x87r5 </span><span class="rs cw13">空</span><span class="rs"> 0.5000000000000000000</span></div>
<div class="r" style="left:1750px;top:540px;"><span class="rn">ST(6)</span> <span class="rv">3FFF8000000000000000</span> <span class="rs">x87r6 </span><span class="rs cw13">空</span><span class="rs"> 1.000000000000000000</span></div>
<div class="r" style="left:1750px;top:554px;"><span class="rn">ST(7)</span> <span class="rv">00000000000000000000</span> <span class="rs">x87r7 </span><span class="rs cw13">空</span><span class="rs"> 0.000000000000000000</span></div>
<svg class="ab" style="left:2546px;top:132px" width="8" height="8" viewBox="0 0 8 8"><path d="M0 7 L4 0.5 L8 7 Z" fill="#a8a8a8"/></svg>
<div style="position:absolute;left:2545px;top:144px;width:10px;height:415px;background:#444444;border-radius:5px;"></div>
<div style="position:absolute;left:2545px;top:144px;width:10px;height:161px;background:#787878;border-radius:5px;"></div>
<svg class="ab" style="left:2546px;top:563px" width="8" height="8" viewBox="0 0 8 8"><path d="M0 1 L4 7.5 L8 1 Z" fill="#a8a8a8"/></svg>
<svg class="ab" style="left:1745px;top:580px" width="8" height="8" viewBox="0 0 8 8"><path d="M7 0 L0.5 4 L7 8 Z" fill="#a8a8a8"/></svg>
<div style="position:absolute;left:1757px;top:579px;width:768px;height:10px;background:#444444;border-radius:5px;"></div>
<div style="position:absolute;left:1757px;top:579px;width:614px;height:10px;background:#787878;border-radius:5px;"></div>
<svg class="ab" style="left:2529px;top:580px" width="8" height="8" viewBox="0 0 8 8"><path d="M1 0 L7.5 4 L1 8 Z" fill="#a8a8a8"/></svg>
<div style="position:absolute;left:1741px;top:594px;width:819px;height:1px;background:#4a4a4a;"></div>
<div class="u" style="left:1746px;top:602.5px;color:#ececec;"><span class="cj">默认</span><span class="la"> (stdcall)</span></div>
<svg class="ab" style="left:2374px;top:606px" width="7" height="4" viewBox="0 0 7 4"><path d="M0 0 L3.5 4 L7 0 Z" fill="#a8a8a8"/></svg>
<div style="position:absolute;left:2389px;top:596px;width:101px;height:25px;background:#333333;"></div>
<svg class="ab" style="left:2394px;top:606px" width="7" height="4" viewBox="0 0 7 4"><path d="M0 0 L3.5 4 L7 0 Z" fill="#a8a8a8"/></svg>
<svg class="ab" style="left:2479px;top:606px" width="7" height="4" viewBox="0 0 7 4"><path d="M0 4 L3.5 0 L7 4 Z" fill="#a8a8a8"/></svg>
<div class="t" style="left:2411px;top:600px;color:#ececec;">5</div>
<div class="ab" style="left:2494px;top:599px;width:16px;height:16px;border:1px solid #8a8a8a;border-radius:3px;background:#262626;"></div>
<div class="u" style="left:2516px;top:602.5px;color:#ececec;"><span class="cj">解锁</span></div>
<div style="position:absolute;left:1741px;top:623px;width:799px;height:13px;background:#3c3c3c;"></div>
<div class="m" style="left:1746px;top:623px;color:#e8e8e0;">1: [esp+4] 00401407 splish.00401407</div>
<div class="m" style="left:1746px;top:636px;color:#e8e8e0;">2: [esp+8] 001009C4</div>
<div class="m" style="left:1746px;top:649px;color:#e8e8e0;">3: [esp+C] 00170A3A</div>
<div class="m" style="left:1746px;top:662px;color:#e8e8e0;">4: [esp+10] 0019FAE0</div>
<div class="m" style="left:1746px;top:675px;color:#e8e8e0;">5: [esp+14] 75C047AB user32.75C047AB</div>
<svg class="ab" style="left:2545px;top:627px" width="8" height="8" viewBox="0 0 8 8"><path d="M0 7 L4 0.5 L8 7 Z" fill="#a8a8a8"/></svg>
<div style="position:absolute;left:2544px;top:639px;width:10px;height:62px;background:#444444;border-radius:5px;"></div>
<div style="position:absolute;left:2544px;top:639px;width:10px;height:62px;background:#787878;border-radius:5px;"></div>
<svg class="ab" style="left:2545px;top:705px" width="8" height="8" viewBox="0 0 8 8"><path d="M0 1 L4 7.5 L8 1 Z" fill="#a8a8a8"/></svg>
<div style="position:absolute;left:2px;top:720px;width:88px;height:25px;background:#3e3e3e;border-radius:3px 3px 0 0;"></div>
<div style="position:absolute;left:2px;top:744px;width:88px;height:2px;background:#a6b2e6;"></div>
<svg class="ab" style="left:12px;top:724px" width="18" height="18" viewBox="0 0 18 18"><rect x="2" y="2" width="13" height="9.5" rx="1" fill="#e8e8e8"/><path d="M4.5 3v7.5 M7 3v7.5 M9.5 3v7.5 M12 3v7.5" stroke="#8a8a8a" stroke-width="1"/><rect x="0" y="6" width="4" height="5" fill="#e0b030"/><circle cx="4" cy="12.5" r="1.6" fill="#555"/><circle cx="12" cy="12.5" r="1.6" fill="#555"/></svg>
<div class="u" style="left:38px;top:727.5px;color:#8f97e6;"><span class="cj">内存</span><span class="la"> 1</span></div>
<div style="position:absolute;left:92px;top:720px;width:88px;height:25px;background:#303030;border-radius:3px 3px 0 0;"></div>
<svg class="ab" style="left:102px;top:724px" width="18" height="18" viewBox="0 0 18 18"><rect x="2" y="2" width="13" height="9.5" rx="1" fill="#e8e8e8"/><path d="M4.5 3v7.5 M7 3v7.5 M9.5 3v7.5 M12 3v7.5" stroke="#8a8a8a" stroke-width="1"/><rect x="0" y="6" width="4" height="5" fill="#e0b030"/><circle cx="4" cy="12.5" r="1.6" fill="#555"/><circle cx="12" cy="12.5" r="1.6" fill="#555"/></svg>
<div class="u" style="left:128px;top:727.5px;color:#ececec;"><span class="cj">内存</span><span class="la"> 2</span></div>
<div style="position:absolute;left:182px;top:720px;width:88px;height:25px;background:#303030;border-radius:3px 3px 0 0;"></div>
<svg class="ab" style="left:192px;top:724px" width="18" height="18" viewBox="0 0 18 18"><rect x="2" y="2" width="13" height="9.5" rx="1" fill="#e8e8e8"/><path d="M4.5 3v7.5 M7 3v7.5 M9.5 3v7.5 M12 3v7.5" stroke="#8a8a8a" stroke-width="1"/><rect x="0" y="6" width="4" height="5" fill="#e0b030"/><circle cx="4" cy="12.5" r="1.6" fill="#555"/><circle cx="12" cy="12.5" r="1.6" fill="#555"/></svg>
<div class="u" style="left:218px;top:727.5px;color:#ececec;"><span class="cj">内存</span><span class="la"> 3</span></div>
<div style="position:absolute;left:272px;top:720px;width:88px;height:25px;background:#303030;border-radius:3px 3px 0 0;"></div>
<svg class="ab" style="left:282px;top:724px" width="18" height="18" viewBox="0 0 18 18"><rect x="2" y="2" width="13" height="9.5" rx="1" fill="#e8e8e8"/><path d="M4.5 3v7.5 M7 3v7.5 M9.5 3v7.5 M12 3v7.5" stroke="#8a8a8a" stroke-width="1"/><rect x="0" y="6" width="4" height="5" fill="#e0b030"/><circle cx="4" cy="12.5" r="1.6" fill="#555"/><circle cx="12" cy="12.5" r="1.6" fill="#555"/></svg>
<div class="u" style="left:308px;top:727.5px;color:#ececec;"><span class="cj">内存</span><span class="la"> 4</span></div>
<div style="position:absolute;left:362px;top:720px;width:88px;height:25px;background:#303030;border-radius:3px 3px 0 0;"></div>
<svg class="ab" style="left:372px;top:724px" width="18" height="18" viewBox="0 0 18 18"><rect x="2" y="2" width="13" height="9.5" rx="1" fill="#e8e8e8"/><path d="M4.5 3v7.5 M7 3v7.5 M9.5 3v7.5 M12 3v7.5" stroke="#8a8a8a" stroke-width="1"/><rect x="0" y="6" width="4" height="5" fill="#e0b030"/><circle cx="4" cy="12.5" r="1.6" fill="#555"/><circle cx="12" cy="12.5" r="1.6" fill="#555"/></svg>
<div class="u" style="left:398px;top:727.5px;color:#ececec;"><span class="cj">内存</span><span class="la"> 5</span></div>
<div style="position:absolute;left:452px;top:720px;width:88px;height:25px;background:#303030;border-radius:3px 3px 0 0;"></div>
<svg class="ab" style="left:462px;top:724px" width="18" height="18" viewBox="0 0 18 18"><circle cx="8" cy="8" r="6.6" fill="#e8a850"/><path d="M1.8 5 L2.6 0.8 L6 3 Z M14.2 5 L13.4 0.8 L10 3 Z" fill="#e8a850"/><ellipse cx="8" cy="10.5" rx="3.6" ry="2.8" fill="#fbe6c4"/><circle cx="5.4" cy="6.6" r="1" fill="#3a2a1a"/><circle cx="10.6" cy="6.6" r="1" fill="#3a2a1a"/><circle cx="8" cy="9.5" r=".9" fill="#5a3a2a"/></svg>
<div class="u" style="left:488px;top:727.5px;color:#ececec;"><span class="cj">监视</span><span class="la"> 1</span></div>
<div style="position:absolute;left:542px;top:720px;width:100px;height:25px;background:#303030;border-radius:3px 3px 0 0;"></div>
<svg class="ab" style="left:552px;top:724px" width="18" height="18" viewBox="0 0 18 18"><text x="0" y="12" font-family="Liberation Sans,sans-serif" font-size="10" fill="#141414">[<tspan fill="#a01818" font-style="italic">x</tspan>=]</text></svg>
<div class="u" style="left:578px;top:727.5px;color:#ececec;"><span class="cj">局部变量</span></div>
<div style="position:absolute;left:644px;top:720px;width:88px;height:25px;background:#303030;border-radius:3px 3px 0 0;"></div>
<svg class="ab" style="left:654px;top:724px" width="18" height="18" viewBox="0 0 18 18"><path d="M4.2 5.6 Q4.6 2.4 8.4 2.4 Q12.6 2.4 12 6 Q11.4 8.4 4.4 14.4" fill="none" stroke="#f4f4f4" stroke-width="1.9" stroke-linecap="round"/><path d="M4.2 5.6 Q4.6 2.4 8.4 2.4 Q12.6 2.4 12 6 Q11.4 8.4 4.4 14.4" fill="none" stroke="#e03030" stroke-width="1.9" stroke-dasharray="2 2"/></svg>
<div class="u" style="left:680px;top:727.5px;color:#ececec;"><span class="cj">结构体</span></div>
<div style="position:absolute;left:2px;top:748px;width:1527px;height:1px;background:#2b2b2b;"></div>
<div style="position:absolute;left:2px;top:764px;width:1527px;height:1px;background:#2b2b2b;"></div>
<div style="position:absolute;left:74px;top:748px;width:1px;height:17px;background:#2b2b2b;"></div>
<div style="position:absolute;left:459px;top:748px;width:1px;height:17px;background:#2b2b2b;"></div>
<div style="position:absolute;left:594px;top:748px;width:1px;height:17px;background:#2b2b2b;"></div>
<div style="position:absolute;left:1528px;top:748px;width:1px;height:17px;background:#2b2b2b;"></div>
<div class="u" style="left:8px;top:750.5px;color:#ececec;"><span class="cj">地址</span></div>
<div class="u" style="left:80px;top:750.5px;color:#ececec;"><span class="cj">十六进制</span></div>
<div class="m" style="left:463px;top:750px;color:#e8e8e0;">ASCII</div>
<div style="position:absolute;left:80px;top:765px;width:16px;height:13px;background:#484848;"></div>
<div style="position:absolute;left:463px;top:765px;width:8px;height:13px;background:#484848;"></div>
<div class="m" style="left:7.5px;top:765px;color:#b0ac9e;">00403463</div>
<div class="m" style="left:79.5px;top:765px;color:#ececdf;">04 00 00 00</div>
<div class="m" style="left:175.5px;top:765px;color:#ececdf;">06 00 00 00</div>
<div class="m" style="left:271.5px;top:765px;color:#ececdf;">00 00 00 00</div>
<div class="m" style="left:367.5px;top:765px;color:#ececdf;">5E 01 00 00</div>
<div class="m" style="left:463.5px;top:765px;color:#ececdf;">............^...</div>
<div class="m" style="left:7.5px;top:778px;color:#b0ac9e;">00403473</div>
<div class="m" style="left:79.5px;top:778px;color:#ececdf;">C8 00 00 00</div>
<div class="m" style="left:175.5px;top:778px;color:#ececdf;">51 04 00 00</div>
<div class="m" style="left:271.5px;top:778px;color:#ececdf;">B8 01 00 00</div>
<div class="m" style="left:367.5px;top:778px;color:#ececdf;">00 00 00 40</div>
<div class="m" style="left:463.5px;top:778px;color:#ececdf;">È...Q...¸......@</div>
<div class="m" style="left:7.5px;top:791px;color:#b0ac9e;">00403483</div>
<div class="m" style="left:79.5px;top:791px;color:#ececdf;">00 00 00 00</div>
<div class="m" style="left:175.5px;top:791px;color:#ececdf;">00 90 09 0D</div>
<div class="m" style="left:271.5px;top:791px;color:#ececdf;">00 0A 0A 07</div>
<div class="m" style="left:367.5px;top:791px;color:#ececdf;">00 52 09 0D</div>
<div class="m" style="left:463.5px;top:791px;color:#ececdf;">.............R..</div>
<div class="m" style="left:7.5px;top:804px;color:#b0ac9e;">00403493</div>
<div class="m" style="left:79.5px;top:804px;color:#ececdf;">00 C4 09 10</div>
<div class="m" style="left:175.5px;top:804px;color:#ececdf;">00 3A 0A 17</div>
<div class="m" style="left:271.5px;top:804px;color:#ececdf;">00 00 00 00</div>
<div class="m" style="left:367.5px;top:804px;color:#ececdf;">00 00 00 00</div>
<div class="m" style="left:463.5px;top:804px;color:#ececdf;">.Ä...:..........</div>
<div class="m" style="left:7.5px;top:817px;color:#b0ac9e;">004034A3</div>
<div class="m" style="left:79.5px;top:817px;color:#ececdf;">00 00 00 00</div>
<div class="m" style="left:175.5px;top:817px;color:#ececdf;">00 00 00 00</div>
<div class="m" style="left:271.5px;top:817px;color:#ececdf;">00 00 00 00</div>
<div class="m" style="left:367.5px;top:817px;color:#ececdf;">00 00 00 00</div>
<div class="m" style="left:463.5px;top:817px;color:#ececdf;">................</div>
<div class="m" style="left:7.5px;top:830px;color:#b0ac9e;">004034B3</div>
<div class="m" style="left:79.5px;top:830px;color:#ececdf;">00 00 00 00</div>
<div class="m" style="left:175.5px;top:830px;color:#ececdf;">00 00 00 00</div>
<div class="m" style="left:271.5px;top:830px;color:#ececdf;">00 00 00 00</div>
<div class="m" style="left:367.5px;top:830px;color:#ececdf;">00 00 00 00</div>
<div class="m" style="left:463.5px;top:830px;color:#ececdf;">................</div>
<div class="m" style="left:7.5px;top:843px;color:#b0ac9e;">004034C3</div>
<div class="m" style="left:79.5px;top:843px;color:#ececdf;">00 00 00 00</div>
<div class="m" style="left:175.5px;top:843px;color:#ececdf;">00 00 00 00</div>
<div class="m" style="left:271.5px;top:843px;color:#ececdf;">00 00 00 00</div>
<div class="m" style="left:367.5px;top:843px;color:#ececdf;">00 00 00 00</div>
<div class="m" style="left:463.5px;top:843px;color:#ececdf;">................</div>
<div class="m" style="left:7.5px;top:856px;color:#b0ac9e;">004034D3</div>
<div class="m" style="left:79.5px;top:856px;color:#ececdf;">00 00 00 00</div>
<div class="m" style="left:175.5px;top:856px;color:#ececdf;">00 00 00 00</div>
<div class="m" style="left:271.5px;top:856px;color:#ececdf;">00 00 00 00</div>
<div class="m" style="left:367.5px;top:856px;color:#ececdf;">00 00 00 00</div>
<div class="m" style="left:463.5px;top:856px;color:#ececdf;">................</div>
<div class="m" style="left:7.5px;top:869px;color:#b0ac9e;">004034E3</div>
<div class="m" style="left:79.5px;top:869px;color:#ececdf;">00 00 00 00</div>
<div class="m" style="left:175.5px;top:869px;color:#ececdf;">00 00 00 00</div>
<div class="m" style="left:271.5px;top:869px;color:#ececdf;">00 00 00 00</div>
<div class="m" style="left:367.5px;top:869px;color:#ececdf;">00 00 00 00</div>
<div class="m" style="left:463.5px;top:869px;color:#ececdf;">................</div>
<div class="m" style="left:7.5px;top:882px;color:#b0ac9e;">004034F3</div>
<div class="m" style="left:79.5px;top:882px;color:#ececdf;">00 00 00 00</div>
<div class="m" style="left:175.5px;top:882px;color:#ececdf;">00 00 00 00</div>
<div class="m" style="left:271.5px;top:882px;color:#ececdf;">00 00 00 00</div>
<div class="m" style="left:367.5px;top:882px;color:#ececdf;">00 00 00 00</div>
<div class="m" style="left:463.5px;top:882px;color:#ececdf;">................</div>
<div class="m" style="left:7.5px;top:895px;color:#b0ac9e;">00403503</div>
<div class="m" style="left:79.5px;top:895px;color:#ececdf;">00 00 00 00</div>
<div class="m" style="left:175.5px;top:895px;color:#ececdf;">00 00 00 00</div>
<div class="m" style="left:271.5px;top:895px;color:#ececdf;">00 00 00 00</div>
<div class="m" style="left:367.5px;top:895px;color:#ececdf;">00 00 00 00</div>
<div class="m" style="left:463.5px;top:895px;color:#ececdf;">................</div>
<div class="m" style="left:7.5px;top:908px;color:#b0ac9e;">00403513</div>
<div class="m" style="left:79.5px;top:908px;color:#ececdf;">00 00 00 00</div>
<div class="m" style="left:175.5px;top:908px;color:#ececdf;">00 00 00 00</div>
<div class="m" style="left:271.5px;top:908px;color:#ececdf;">00 00 00 00</div>
<div class="m" style="left:367.5px;top:908px;color:#ececdf;">00 00 00 00</div>
<div class="m" style="left:463.5px;top:908px;color:#ececdf;">................</div>
<div class="m" style="left:7.5px;top:921px;color:#b0ac9e;">00403523</div>
<div class="m" style="left:79.5px;top:921px;color:#ececdf;">00 00 00 00</div>
<div class="m" style="left:175.5px;top:921px;color:#ececdf;">00 00 00 00</div>
<div class="m" style="left:271.5px;top:921px;color:#ececdf;">00 00 00 00</div>
<div class="m" style="left:367.5px;top:921px;color:#ececdf;">00 00 00 00</div>
<div class="m" style="left:463.5px;top:921px;color:#ececdf;">................</div>
<div class="m" style="left:7.5px;top:934px;color:#b0ac9e;">00403533</div>
<div class="m" style="left:79.5px;top:934px;color:#ececdf;">00 00 00 00</div>
<div class="m" style="left:175.5px;top:934px;color:#ececdf;">00 00 00 00</div>
<div class="m" style="left:271.5px;top:934px;color:#ececdf;">00 00 00 00</div>
<div class="m" style="left:367.5px;top:934px;color:#ececdf;">00 00 00 00</div>
<div class="m" style="left:463.5px;top:934px;color:#ececdf;">................</div>
<div class="m" style="left:7.5px;top:947px;color:#b0ac9e;">00403543</div>
<div class="m" style="left:79.5px;top:947px;color:#ececdf;">00 00 00 00</div>
<div class="m" style="left:175.5px;top:947px;color:#ececdf;">00 00 00 00</div>
<div class="m" style="left:271.5px;top:947px;color:#ececdf;">00 00 00 00</div>
<div class="m" style="left:367.5px;top:947px;color:#ececdf;">00 00 00 00</div>
<div class="m" style="left:463.5px;top:947px;color:#ececdf;">................</div>
<div class="m" style="left:7.5px;top:960px;color:#b0ac9e;">00403553</div>
<div class="m" style="left:79.5px;top:960px;color:#ececdf;">00 00 00 00</div>
<div class="m" style="left:175.5px;top:960px;color:#ececdf;">00 00 00 00</div>
<div class="m" style="left:271.5px;top:960px;color:#ececdf;">00 00 00 00</div>
<div class="m" style="left:367.5px;top:960px;color:#ececdf;">00 00 00 00</div>
<div class="m" style="left:463.5px;top:960px;color:#ececdf;">................</div>
<div class="m" style="left:7.5px;top:973px;color:#b0ac9e;">00403563</div>
<div class="m" style="left:79.5px;top:973px;color:#ececdf;">00 00 00 00</div>
<div class="m" style="left:175.5px;top:973px;color:#ececdf;">00 00 00 00</div>
<div class="m" style="left:271.5px;top:973px;color:#ececdf;">00 00 00 00</div>
<div class="m" style="left:367.5px;top:973px;color:#ececdf;">00 00 00 00</div>
<div class="m" style="left:463.5px;top:973px;color:#ececdf;">................</div>
<div style="position:absolute;left:74px;top:765px;width:1px;height:219px;background:#6e6e6e;"></div>
<div style="position:absolute;left:171px;top:765px;width:1px;height:219px;background:#6e6e6e;"></div>
<div style="position:absolute;left:267px;top:765px;width:1px;height:219px;background:#6e6e6e;"></div>
<div style="position:absolute;left:363px;top:765px;width:1px;height:219px;background:#6e6e6e;"></div>
<div style="position:absolute;left:459px;top:765px;width:1px;height:219px;background:#6e6e6e;"></div>
<div style="position:absolute;left:594px;top:765px;width:1px;height:219px;background:#6e6e6e;"></div>
<div style="position:absolute;left:1528px;top:765px;width:1px;height:220px;background:#5a5a5a;"></div>
<div class="ab" style="left:72px;top:762.5px;width:29px;height:17.5px;border:2.5px solid #e23232;"></div>
<div style="position:absolute;left:79px;top:815px;width:88px;height:2px;background:#d84646;"></div>
<svg class="ab" style="left:1534px;top:752px" width="8" height="8" viewBox="0 0 8 8"><path d="M0 7 L4 0.5 L8 7 Z" fill="#a8a8a8"/></svg>
<div style="position:absolute;left:1533px;top:764px;width:10px;height:205px;background:#444444;border-radius:5px;"></div>
<div style="position:absolute;left:1533px;top:796px;width:10px;height:97px;background:#787878;border-radius:5px;"></div>
<svg class="ab" style="left:1534px;top:973px" width="8" height="8" viewBox="0 0 8 8"><path d="M0 1 L4 7.5 L8 1 Z" fill="#a8a8a8"/></svg>
<div style="position:absolute;left:1549px;top:719px;width:1px;height:268px;background:#6e6e6e;"></div>
<div style="position:absolute;left:1551px;top:720px;width:989px;height:13px;background:#3c3c3c;"></div>
<div class="m" style="left:1555px;top:720px;color:#a8f05a;">0019FAA4</div>
<div class="m" style="left:1627px;top:720px;color:#ececdf;">0019FAB4</div>
<div class="m" style="left:1555px;top:733px;color:#b0ac9e;">0019FAA8</div>
<div class="m" style="left:1630px;top:733px;color:#ececdf;">00401407</div>
<div class="m" style="left:1701px;top:733px;color:#e8607c;"><span class="cw13">返</span><span class="cw13">回</span><span class="cw13">到</span> splish.00401407 <span class="cw13">自</span> splish.sub_4015E4</div>
<div class="m" style="left:1555px;top:746px;color:#b0ac9e;">0019FAAC</div>
<div class="m" style="left:1630px;top:746px;color:#ececdf;">001009C4</div>
<div class="m" style="left:1555px;top:759px;color:#b0ac9e;">0019FAB0</div>
<div class="m" style="left:1630px;top:759px;color:#ececdf;">00170A3A</div>
<div class="m" style="left:1555px;top:772px;color:#b0ac9e;">0019FAB4</div>
<div class="m" style="left:1630px;top:772px;color:#ececdf;">0019FAE0</div>
<div class="m" style="left:1555px;top:785px;color:#b0ac9e;">0019FAB8</div>
<div class="m" style="left:1630px;top:785px;color:#ececdf;">75C047AB</div>
<div class="m" style="left:1701px;top:785px;color:#e8607c;"><span class="cw13">返</span><span class="cw13">回</span><span class="cw13">到</span> user32.75C047AB <span class="cw13">自</span> ???</div>
<div class="m" style="left:1555px;top:798px;color:#b0ac9e;">0019FABC</div>
<div class="m" style="left:1630px;top:798px;color:#ececdf;">003F07F4</div>
<div class="m" style="left:1555px;top:811px;color:#b0ac9e;">0019FAC0</div>
<div class="m" style="left:1630px;top:811px;color:#ececdf;">00000111</div>
<div class="m" style="left:1555px;top:824px;color:#b0ac9e;">0019FAC4</div>
<div class="m" style="left:1630px;top:824px;color:#ececdf;">00000002</div>
<div class="m" style="left:1555px;top:837px;color:#b0ac9e;">0019FAC8</div>
<div class="m" style="left:1630px;top:837px;color:#ececdf;">00070A0A</div>
<div class="m" style="left:1555px;top:850px;color:#b0ac9e;">0019FACC</div>
<div class="m" style="left:1630px;top:850px;color:#ececdf;">00000000</div>
<div class="m" style="left:1555px;top:863px;color:#b0ac9e;">0019FAD0</div>
<div class="m" style="left:1630px;top:863px;color:#ececdf;">DCBAABCD</div>
<div class="m" style="left:1555px;top:876px;color:#b0ac9e;">0019FAD4</div>
<div class="m" style="left:1630px;top:876px;color:#ececdf;">00401178</div>
<div class="m" style="left:1701px;top:876px;color:#ececdf;">splish.00401178</div>
<div class="m" style="left:1555px;top:889px;color:#b0ac9e;">0019FAD8</div>
<div class="m" style="left:1630px;top:889px;color:#ececdf;">00000111</div>
<div class="m" style="left:1555px;top:902px;color:#b0ac9e;">0019FADC</div>
<div class="m" style="left:1630px;top:902px;color:#ececdf;">00000000</div>
<div class="m" style="left:1555px;top:915px;color:#b0ac9e;">0019FAE0</div>
<div class="m" style="left:1630px;top:915px;color:#ececdf;">0019FBC4</div>
<div class="m" style="left:1555px;top:928px;color:#b0ac9e;">0019FAE4</div>
<div class="m" style="left:1630px;top:928px;color:#ececdf;">75BE52AC</div>
<div class="m" style="left:1701px;top:928px;color:#e8607c;"><span class="cw13">返</span><span class="cw13">回</span><span class="cw13">到</span> user32.75BE52AC <span class="cw13">自</span> user32.75C04780</div>
<div class="m" style="left:1555px;top:941px;color:#b0ac9e;">0019FAE8</div>
<div class="m" style="left:1630px;top:941px;color:#ececdf;">00401178</div>
<div class="m" style="left:1701px;top:941px;color:#ececdf;">splish.00401178</div>
<div class="m" style="left:1555px;top:954px;color:#b0ac9e;">0019FAEC</div>
<div class="m" style="left:1630px;top:954px;color:#ececdf;">003F07F4</div>
<div style="position:absolute;left:1622px;top:720px;width:1px;height:247px;background:#6e6e6e;"></div>
<div style="position:absolute;left:1696px;top:720px;width:1px;height:247px;background:#6e6e6e;"></div>
<div style="position:absolute;left:1624px;top:735px;width:2px;height:47px;background:#ff8f7d;"></div>
<div style="position:absolute;left:1624px;top:735px;width:5px;height:2px;background:#ff8f7d;"></div>
<div style="position:absolute;left:1624px;top:780px;width:5px;height:2px;background:#ff8f7d;"></div>
<div style="position:absolute;left:1624px;top:787px;width:2px;height:138px;background:#ff8f7d;"></div>
<div style="position:absolute;left:1624px;top:787px;width:5px;height:2px;background:#ff8f7d;"></div>
<div style="position:absolute;left:1624px;top:923px;width:5px;height:2px;background:#ff8f7d;"></div>
<div style="position:absolute;left:1624px;top:930px;width:2px;height:37px;background:#ff8f7d;"></div>
<div style="position:absolute;left:1624px;top:930px;width:5px;height:2px;background:#ff8f7d;"></div>
<svg class="ab" style="left:1555px;top:973px" width="8" height="8" viewBox="0 0 8 8"><path d="M7 0 L0.5 4 L7 8 Z" fill="#a8a8a8"/></svg>
<div style="position:absolute;left:1567px;top:972px;width:957px;height:10px;background:#444444;border-radius:5px;"></div>
<div style="position:absolute;left:1567px;top:972px;width:344px;height:10px;background:#787878;border-radius:5px;"></div>
<svg class="ab" style="left:2528px;top:973px" width="8" height="8" viewBox="0 0 8 8"><path d="M1 0 L7.5 4 L1 8 Z" fill="#a8a8a8"/></svg>
<svg class="ab" style="left:2545px;top:724px" width="8" height="8" viewBox="0 0 8 8"><path d="M0 7 L4 0.5 L8 7 Z" fill="#a8a8a8"/></svg>
<div style="position:absolute;left:2544px;top:736px;width:10px;height:216px;background:#444444;border-radius:5px;"></div>
<div style="position:absolute;left:2544px;top:922px;width:10px;height:24px;background:#787878;border-radius:5px;"></div>
<svg class="ab" style="left:2545px;top:956px" width="8" height="8" viewBox="0 0 8 8"><path d="M0 1 L4 7.5 L8 1 Z" fill="#a8a8a8"/></svg>
<div class="u" style="left:1px;top:998.5px;color:#ececec;"><span class="cj">命令</span><span class="la">:</span></div>
<div style="position:absolute;left:38px;top:993px;width:2416px;height:20px;background:#333333;"></div>
<div class="u" style="left:2461px;top:998.5px;color:#ececec;"><span class="cj">默认</span></div>
<svg class="ab" style="left:2547px;top:1001px" width="7" height="4" viewBox="0 0 7 4"><path d="M0 0 L3.5 4 L7 0 Z" fill="#a8a8a8"/></svg>
<div class="u" style="left:13px;top:1023.5px;color:#b8b43c;"><span class="cj">已暂停</span></div>
<div class="u" style="left:66px;top:1025.5px;color:#e6e6e6;"><span class="la">splish.exe: 00403463 -&gt; 00403463 (0x00000001 bytes)</span></div>
<div class="u" style="left:2422px;top:1023.5px;color:#ececec;"><span class="cj">已调试时间：</span></div>
<div class="u" style="left:2500px;top:1025.5px;color:#ececec;"><span class="la">2:05:22:50</span></div>
</body></html>
